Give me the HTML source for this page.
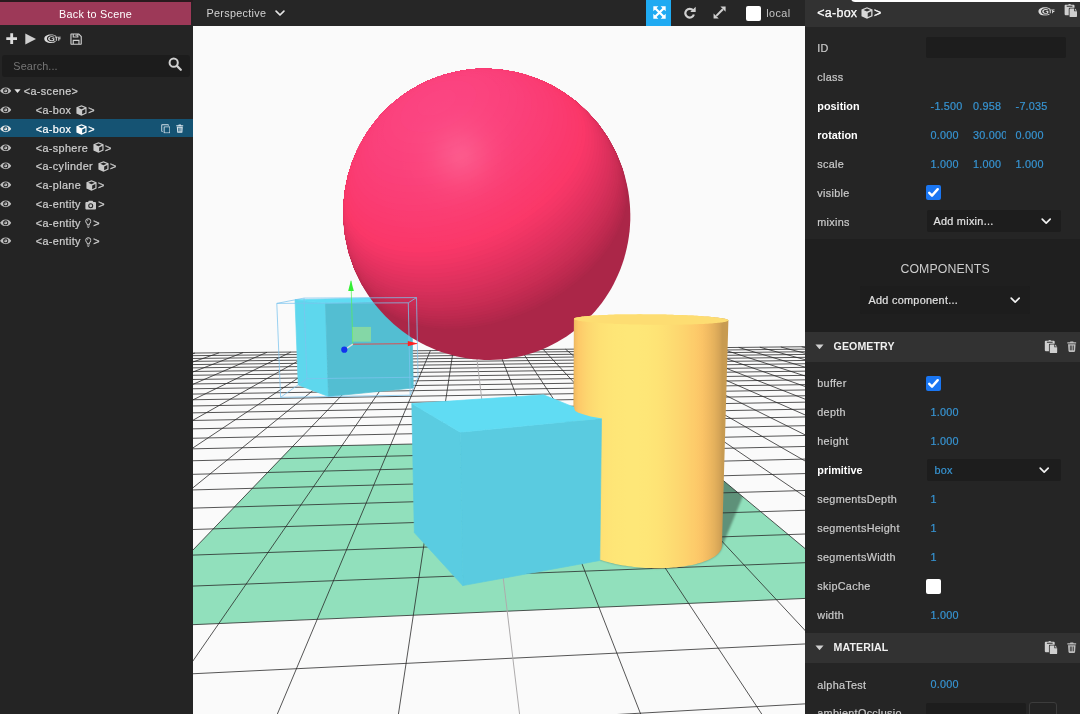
<!DOCTYPE html>
<html lang="en"><head><meta charset="utf-8"><title>A-Frame Inspector</title>
<style>
*{box-sizing:border-box;margin:0;padding:0}
html,body{width:1080px;height:714px;overflow:hidden;background:#242424;font-family:"Liberation Sans",sans-serif;}
#root{position:relative;width:1080px;height:714px;overflow:hidden}
#scene{position:absolute;left:0;top:0}
.abs{position:absolute}
#left{position:absolute;left:0;top:0;width:192.7px;height:714px;background:#242424}
#left,#bar,#right{will-change:transform}
#back{position:absolute;left:0;top:1.8px;width:191.1px;height:23.4px;background:#9d3958;color:#fff;font-size:10.83px;letter-spacing:0.25px;text-align:center;line-height:24.4px;}
#topstrip{position:absolute;left:0;top:0;width:192.7px;height:1.8px;background:#2a1a1e}
#search{position:absolute;left:2px;top:55px;width:187.5px;height:21.5px;background:#1c1c1c;border-radius:3px;color:#767676;font-size:10.83px;letter-spacing:0.12px;line-height:22px;padding-left:11.3px}
.row{position:absolute;left:0;width:192.7px;height:18.75px;color:#cdcdcd;-webkit-text-stroke:0.22px #cdcdcd;font-size:10.83px;letter-spacing:0.36px;line-height:18.75px;white-space:nowrap}
.row.sel{background:#155373;color:#fff;-webkit-text-stroke:0.22px #fff}
.row .t{position:absolute;left:35.8px;top:1.1px}
.row svg{position:absolute}
.ic{fill:#c8c8c8}
#bar{position:absolute;left:192.7px;top:0;width:612.5px;height:26.4px;background:#262626;color:#d2d2d2;font-size:11px}
#right{position:absolute;left:805.2px;top:0;width:274.8px;height:714px;background:#252525;color:#c9c9c9;font-size:10px}
#rhead{position:absolute;left:0;top:0;width:100%;height:26.6px;background:#323232}
.lab{position:absolute;left:12.3px;white-space:nowrap;color:#cbcbcb;-webkit-text-stroke:0.2px #cbcbcb;font-size:10.83px;letter-spacing:0.3px}
.lab.b{font-weight:bold;color:#fff;letter-spacing:0.02px;-webkit-text-stroke:0}
.num{position:absolute;white-space:nowrap;color:#3794d2;-webkit-text-stroke:0.2px #3794d2;font-size:10.83px;letter-spacing:0.2px}
.inp{position:absolute;background:#1d1d1d;border-radius:2px}
.chead{position:absolute;left:0;width:100%;height:29.8px;background:#323232}
.chead .ti{position:absolute;left:28.6px;top:0;line-height:29.8px;font-weight:bold;color:#f0f0f0;font-size:10.6px;letter-spacing:0.1px}
.cb{position:absolute;width:14.8px;height:14.8px;border-radius:2px}
.cb.on{background:#1a76f2}
.cb.off{background:#fff}
</style></head><body><div id="root">
<svg id="scene" width="1080" height="714" viewBox="0 0 1080 714">
<defs>
<linearGradient id="cylg" gradientUnits="userSpaceOnUse" x1="573.3" y1="0" x2="725.1" y2="0"><stop offset="0.000" stop-color="#e0ae52"/><stop offset="0.004" stop-color="#ecb856"/><stop offset="0.015" stop-color="#f9c15b"/><stop offset="0.034" stop-color="#ffca5f"/><stop offset="0.060" stop-color="#ffd263"/><stop offset="0.094" stop-color="#ffd966"/><stop offset="0.135" stop-color="#ffdf69"/><stop offset="0.182" stop-color="#ffe46b"/><stop offset="0.236" stop-color="#ffe76d"/><stop offset="0.294" stop-color="#ffea6e"/><stop offset="0.356" stop-color="#ffeb6f"/><stop offset="0.421" stop-color="#ffeb6f"/><stop offset="0.488" stop-color="#ffe96e"/><stop offset="0.555" stop-color="#ffe66c"/><stop offset="0.622" stop-color="#ffe16a"/><stop offset="0.686" stop-color="#ffdb67"/><stop offset="0.746" stop-color="#ffd564"/><stop offset="0.802" stop-color="#ffcd61"/><stop offset="0.852" stop-color="#fdc55d"/><stop offset="0.895" stop-color="#f1bb58"/><stop offset="0.932" stop-color="#e5b254"/><stop offset="0.961" stop-color="#d8a74f"/><stop offset="0.982" stop-color="#ca9d4a"/><stop offset="0.995" stop-color="#ca9d4a"/><stop offset="1.000" stop-color="#ca9d4a"/><stop offset="1.000" stop-color="#ca9d4a"/></linearGradient>
<radialGradient id="spec" gradientUnits="userSpaceOnUse" cx="461.2" cy="156.7" r="140"><stop offset="0.000" stop-color="#fff" stop-opacity="0.137"/><stop offset="0.036" stop-color="#fff" stop-opacity="0.132"/><stop offset="0.071" stop-color="#fff" stop-opacity="0.120"/><stop offset="0.107" stop-color="#fff" stop-opacity="0.103"/><stop offset="0.143" stop-color="#fff" stop-opacity="0.085"/><stop offset="0.179" stop-color="#fff" stop-opacity="0.068"/><stop offset="0.214" stop-color="#fff" stop-opacity="0.053"/><stop offset="0.250" stop-color="#fff" stop-opacity="0.042"/><stop offset="0.286" stop-color="#fff" stop-opacity="0.032"/><stop offset="0.321" stop-color="#fff" stop-opacity="0.025"/><stop offset="0.357" stop-color="#fff" stop-opacity="0.020"/><stop offset="0.393" stop-color="#fff" stop-opacity="0.015"/><stop offset="0.429" stop-color="#fff" stop-opacity="0.012"/><stop offset="0.464" stop-color="#fff" stop-opacity="0.010"/><stop offset="0.500" stop-color="#fff" stop-opacity="0.008"/><stop offset="0.536" stop-color="#fff" stop-opacity="0.007"/><stop offset="0.571" stop-color="#fff" stop-opacity="0.005"/><stop offset="0.607" stop-color="#fff" stop-opacity="0.004"/><stop offset="0.643" stop-color="#fff" stop-opacity="0.003"/><stop offset="0.679" stop-color="#fff" stop-opacity="0.002"/><stop offset="0.714" stop-color="#fff" stop-opacity="0.002"/><stop offset="0.750" stop-color="#fff" stop-opacity="0.002"/><stop offset="0.786" stop-color="#fff" stop-opacity="0.001"/><stop offset="0.821" stop-color="#fff" stop-opacity="0.001"/><stop offset="0.857" stop-color="#fff" stop-opacity="0.001"/><stop offset="0.893" stop-color="#fff" stop-opacity="0.001"/><stop offset="0.929" stop-color="#fff" stop-opacity="0.001"/><stop offset="0.964" stop-color="#fff" stop-opacity="0.001"/><stop offset="1.000" stop-color="#fff" stop-opacity="0.000"/></radialGradient>
<clipPath id="sphclip"><polygon points="630.3,219.8 630.0,225.4 629.6,231.0 628.9,236.6 628.0,242.1 626.9,247.6 625.6,253.0 624.1,258.4 622.4,263.7 620.5,268.9 618.4,274.1 616.1,279.1 613.7,284.0 611.0,288.9 608.2,293.6 605.1,298.2 602.0,302.7 598.6,307.0 595.1,311.3 591.4,315.3 587.6,319.2 583.7,323.0 579.6,326.6 575.4,330.0 571.0,333.3 566.5,336.4 561.9,339.3 557.3,342.1 552.5,344.6 547.6,347.0 542.6,349.2 537.5,351.2 532.4,353.0 527.2,354.6 522.0,356.0 516.7,357.1 511.3,358.1 505.9,358.9 500.5,359.5 495.1,359.8 489.7,360.0 484.2,359.9 478.7,359.6 473.3,359.2 467.9,358.5 462.5,357.6 457.1,356.5 451.7,355.1 446.5,353.6 441.2,351.9 436.1,350.0 431.0,347.8 425.9,345.5 421.0,343.0 416.1,340.3 411.4,337.4 406.7,334.3 402.2,331.0 397.8,327.5 393.5,323.9 389.4,320.1 385.4,316.2 381.5,312.1 377.8,307.8 374.2,303.4 370.9,298.9 367.6,294.2 364.6,289.4 361.8,284.4 359.1,279.4 356.6,274.2 354.3,269.0 352.3,263.6 350.4,258.2 348.7,252.7 347.3,247.1 346.0,241.5 345.0,235.8 344.2,230.1 343.6,224.4 343.3,218.6 343.2,212.8 343.3,207.0 343.6,201.2 344.2,195.4 345.0,189.7 346.0,184.0 347.2,178.3 348.7,172.7 350.4,167.1 352.3,161.6 354.4,156.2 356.8,150.9 359.3,145.6 362.1,140.5 365.1,135.5 368.3,130.6 371.7,125.9 375.2,121.3 379.0,116.8 382.9,112.5 387.0,108.4 391.3,104.4 395.7,100.6 400.3,97.0 405.0,93.6 409.9,90.4 414.9,87.4 420.0,84.6 425.2,82.0 430.6,79.7 436.0,77.5 441.5,75.6 447.1,73.9 452.7,72.5 458.4,71.3 464.1,70.3 469.9,69.5 475.7,69.0 481.6,68.8 487.4,68.7 493.2,69.0 499.0,69.4 504.8,70.1 510.6,71.1 516.3,72.2 521.9,73.6 527.5,75.2 533.0,77.1 538.5,79.2 543.8,81.5 549.1,84.0 554.3,86.7 559.3,89.6 564.2,92.7 569.0,96.0 573.6,99.5 578.1,103.2 582.5,107.0 586.7,111.0 590.7,115.2 594.6,119.5 598.3,124.0 601.8,128.6 605.1,133.3 608.2,138.2 611.1,143.2 613.9,148.2 616.4,153.4 618.7,158.6 620.8,164.0 622.8,169.4 624.5,174.8 625.9,180.4 627.2,185.9 628.3,191.5 629.1,197.2 629.7,202.8 630.1,208.4 630.3,214.1"/></clipPath>
</defs>
<filter id="desat" x="0" y="0" width="1080" height="714" filterUnits="userSpaceOnUse" color-interpolation-filters="sRGB"><feColorMatrix type="matrix" values="0.9598 0.0211 0.0375 0 0  0.0220 0.9421 0.0401 0 0  0.0306 0.0308 0.9490 0 0  0 0 0 1 0"/></filter>
<rect x="0" y="0" width="1080" height="714" fill="#fafafa"/>
<g filter="url(#desat)">
<polygon points="292.4,446.6 672.6,438.4 862.1,596.0 118.0,627.9" fill="#8be3ba"/>
<clipPath id="planeclip"><polygon points="292.4,446.6 672.6,438.4 862.1,596.0 118.0,627.9"/></clipPath>
<filter id="shblur" x="600" y="400" width="300" height="250" filterUnits="userSpaceOnUse"><feGaussianBlur stdDeviation="1.3"/></filter>
<g clip-path="url(#planeclip)"><polygon points="634.3,471.9 635.8,470.5 637.8,469.1 640.3,467.9 643.3,466.7 646.8,465.7 650.7,464.8 655.0,464.0 659.6,463.4 664.5,462.9 669.6,462.6 674.9,462.3 680.4,462.3 686.0,462.4 691.6,462.6 697.2,463.0 702.8,463.5 708.3,464.2 713.7,465.0 718.8,465.9 723.7,466.9 728.3,468.1 732.5,469.3 736.4,470.7 739.8,472.1 742.7,473.6 745.1,475.2 747.0,476.8 748.2,478.4 748.8,480.1 748.8,481.7 721.6,548.0 720.4,550.7 718.4,553.3 715.4,555.9 711.6,558.2 707.0,560.4 701.6,562.4 695.5,564.2 688.7,565.6 681.3,566.8 673.5,567.6 665.3,568.1 656.9,568.2 648.3,568.0 639.7,567.5 631.3,566.6 623.1,565.4 615.2,563.9 607.8,562.1 601.0,560.1 594.7,557.9 589.2,555.4 584.4,552.9 580.5,550.2 577.3,547.5 575.0,544.7 573.5,542.0 572.8,539.2 573.0,536.5 573.9,533.9 575.6,531.4" fill="#5a9378" filter="url(#shblur)"/></g>
<g id="grid" fill="none" stroke-width="1"><path stroke="#262626" stroke-opacity="0.78" d="M190.0 353.1L808.0 346.7M190.0 355.7L808.0 349.1M190.0 358.5L808.0 351.7M190.0 361.4L808.0 354.4M190.0 364.6L808.0 357.3M190.0 367.9L808.0 360.4M190.0 371.5L808.0 363.7M190.0 375.3L808.0 367.3M190.0 379.5L808.0 371.1M190.0 384.0L808.0 375.3M190.0 388.8L808.0 379.8M190.0 394.1L808.0 384.6M190.0 399.8L808.0 389.9M190.0 406.0L808.0 395.7M190.0 412.9L808.0 402.1M190.0 420.5L808.0 409.1M190.0 428.9L808.0 416.9M190.0 438.3L808.0 425.6M195.0 353.1L190.0 354.6M190.0 448.9L808.0 435.4M219.1 352.8L190.0 363.0M190.0 460.8L808.0 446.4M243.1 352.6L190.0 373.1M190.0 474.4L808.0 459.0M267.0 352.3L190.0 385.6M190.0 490.0L808.0 473.5M290.8 352.1L190.0 401.3M190.0 508.2L808.0 490.4M314.4 351.8L190.0 421.9M190.0 529.6L808.0 510.2M337.8 351.6L190.0 449.9M190.0 555.2L808.0 533.9M361.2 351.3L190.0 490.2M190.0 586.2L808.0 562.6M384.4 351.1L190.0 553.1M190.0 624.8L808.0 598.3M407.5 350.9L190.0 665.2M190.0 673.9L808.0 643.8M430.4 350.6L276.1 717.0M572.9 717.0L808.0 703.7M453.2 350.4L398.0 717.0M498.5 349.9L641.8 717.0M520.9 349.7L763.7 717.0M543.3 349.5L808.0 633.6M565.5 349.2L808.0 551.0M587.5 349.0L808.0 498.7M609.5 348.8L808.0 462.7M631.3 348.5L808.0 436.3M653.0 348.3L808.0 416.2M674.6 348.1L808.0 400.3M696.1 347.9L808.0 387.5M717.4 347.7L808.0 376.9M738.7 347.4L808.0 368.0M759.8 347.2L808.0 360.5M780.8 347.0L808.0 354.0M801.7 346.8L808.0 348.3"/><path stroke="#aaaaaa" d="M475.9 350.2L519.9 717.0"/></g>
<g id="selbox"><polygon points="295.0,299.8 325.4,303.1 328.5,396.5 298.2,384.9" fill="#54d8f0" stroke="#54d8f0" stroke-width="0.7" stroke-linejoin="round"/><polygon points="325.4,303.1 411.6,300.7 413.3,388.0 328.5,396.5" fill="#4abfd5" stroke="#4abfd5" stroke-width="0.7" stroke-linejoin="round"/><polygon points="295.0,299.8 375.7,297.8 411.6,300.7 325.4,303.1" fill="#56ddf6" stroke="#56ddf6" stroke-width="0.7" stroke-linejoin="round"/></g>
<g id="sphere"><polygon points="630.3,219.8 630.0,225.4 629.6,231.0 628.9,236.6 628.0,242.1 626.9,247.6 625.6,253.0 624.1,258.4 622.4,263.7 620.5,268.9 618.4,274.1 616.1,279.1 613.7,284.0 611.0,288.9 608.2,293.6 605.1,298.2 602.0,302.7 598.6,307.0 595.1,311.3 591.4,315.3 587.6,319.2 583.7,323.0 579.6,326.6 575.4,330.0 571.0,333.3 566.5,336.4 561.9,339.3 557.3,342.1 552.5,344.6 547.6,347.0 542.6,349.2 537.5,351.2 532.4,353.0 527.2,354.6 522.0,356.0 516.7,357.1 511.3,358.1 505.9,358.9 500.5,359.5 495.1,359.8 489.7,360.0 484.2,359.9 478.7,359.6 473.3,359.2 467.9,358.5 462.5,357.6 457.1,356.5 451.7,355.1 446.5,353.6 441.2,351.9 436.1,350.0 431.0,347.8 425.9,345.5 421.0,343.0 416.1,340.3 411.4,337.4 406.7,334.3 402.2,331.0 397.8,327.5 393.5,323.9 389.4,320.1 385.4,316.2 381.5,312.1 377.8,307.8 374.2,303.4 370.9,298.9 367.6,294.2 364.6,289.4 361.8,284.4 359.1,279.4 356.6,274.2 354.3,269.0 352.3,263.6 350.4,258.2 348.7,252.7 347.3,247.1 346.0,241.5 345.0,235.8 344.2,230.1 343.6,224.4 343.3,218.6 343.2,212.8 343.3,207.0 343.6,201.2 344.2,195.4 345.0,189.7 346.0,184.0 347.2,178.3 348.7,172.7 350.4,167.1 352.3,161.6 354.4,156.2 356.8,150.9 359.3,145.6 362.1,140.5 365.1,135.5 368.3,130.6 371.7,125.9 375.2,121.3 379.0,116.8 382.9,112.5 387.0,108.4 391.3,104.4 395.7,100.6 400.3,97.0 405.0,93.6 409.9,90.4 414.9,87.4 420.0,84.6 425.2,82.0 430.6,79.7 436.0,77.5 441.5,75.6 447.1,73.9 452.7,72.5 458.4,71.3 464.1,70.3 469.9,69.5 475.7,69.0 481.6,68.8 487.4,68.7 493.2,69.0 499.0,69.4 504.8,70.1 510.6,71.1 516.3,72.2 521.9,73.6 527.5,75.2 533.0,77.1 538.5,79.2 543.8,81.5 549.1,84.0 554.3,86.7 559.3,89.6 564.2,92.7 569.0,96.0 573.6,99.5 578.1,103.2 582.5,107.0 586.7,111.0 590.7,115.2 594.6,119.5 598.3,124.0 601.8,128.6 605.1,133.3 608.2,138.2 611.1,143.2 613.9,148.2 616.4,153.4 618.7,158.6 620.8,164.0 622.8,169.4 624.5,174.8 625.9,180.4 627.2,185.9 628.3,191.5 629.1,197.2 629.7,202.8 630.1,208.4 630.3,214.1" fill="#af2145"/><polygon points="575.9,101.3 587.5,111.9 598.3,124.1 608.0,137.8 616.2,152.9 622.7,169.2 626.9,186.2 626.9,202.7 623.5,218.4 617.5,233.1 609.5,246.8 599.9,259.5 589.1,271.2 577.2,281.8 564.4,291.5 550.9,300.1 536.8,307.7 522.1,314.2 507.1,319.6 491.6,323.9 475.9,327.0 460.0,328.7 444.1,328.9 428.2,327.5 412.7,324.2 397.8,318.8 383.9,310.7 371.7,299.5 362.0,284.8 354.3,269.0 348.7,252.7 345.1,236.3 343.4,220.0 343.4,204.3 345.0,189.3 348.0,175.3 352.0,162.4 356.8,150.9 362.0,140.7 367.4,131.9 372.8,124.4 377.9,118.0 382.8,112.6 387.2,108.2 391.2,104.4 394.9,101.3 398.2,98.7 401.1,96.4 403.8,94.4 406.3,92.8 408.5,91.3 410.6,89.9 412.5,88.8 414.4,87.7 416.1,86.7 417.7,85.8 419.2,85.0 420.7,84.2 422.2,83.5 423.6,82.8 425.0,82.1 426.4,81.5 427.9,80.8 429.3,80.2 430.7,79.6 432.2,79.0 433.7,78.4 435.3,77.8 437.0,77.2 438.7,76.5 440.6,75.9 442.6,75.2 444.8,74.6 447.2,73.9 449.8,73.2 452.8,72.5 456.1,71.7 459.8,71.0 464.1,70.3 468.9,69.6 474.5,69.1 480.9,68.8 488.2,68.8 496.5,69.2 505.8,70.3 516.1,72.2 527.3,75.2 539.1,79.4 551.3,85.1 563.7,92.4" fill="#b22246"/><polygon points="575.9,101.3 587.5,111.9 598.3,124.1 608.0,137.8 616.2,152.9 622.7,169.2 626.4,186.0 625.8,202.2 622.1,217.5 616.0,232.0 607.9,245.4 598.3,257.9 587.5,269.4 575.6,279.9 563.0,289.3 549.6,297.8 535.6,305.3 521.2,311.8 506.3,317.1 491.0,321.4 475.5,324.5 459.8,326.3 444.0,326.7 428.3,325.4 412.9,322.4 398.1,317.2 384.2,309.6 371.9,299.0 362.0,284.8 354.3,269.0 348.7,252.7 345.1,236.3 343.4,220.0 343.4,204.3 345.0,189.3 348.0,175.3 352.0,162.4 356.8,150.9 362.0,140.7 367.4,131.9 372.8,124.4 377.9,118.0 382.8,112.6 387.2,108.2 391.2,104.4 394.9,101.3 398.2,98.7 401.1,96.4 403.8,94.4 406.3,92.8 408.5,91.3 410.6,89.9 412.5,88.8 414.4,87.7 416.1,86.7 417.7,85.8 419.2,85.0 420.7,84.2 422.2,83.5 423.6,82.8 425.0,82.1 426.4,81.5 427.9,80.8 429.3,80.2 430.7,79.6 432.2,79.0 433.7,78.4 435.3,77.8 437.0,77.2 438.7,76.5 440.6,75.9 442.6,75.2 444.8,74.6 447.2,73.9 449.8,73.2 452.8,72.5 456.1,71.7 459.8,71.0 464.1,70.3 468.9,69.6 474.5,69.1 480.9,68.8 488.2,68.8 496.5,69.2 505.8,70.3 516.1,72.2 527.3,75.2 539.1,79.4 551.3,85.1 563.7,92.4" fill="#b62248"/><polygon points="575.9,101.3 587.5,111.9 598.3,124.1 608.0,137.8 616.2,152.9 622.7,169.2 625.7,185.7 624.7,201.6 620.7,216.6 614.4,230.8 606.2,244.0 596.6,256.3 585.8,267.5 574.0,277.8 561.5,287.1 548.2,295.5 534.4,302.9 520.1,309.2 505.4,314.6 490.4,318.8 475.0,322.0 459.5,323.8 443.9,324.3 428.4,323.2 413.1,320.4 398.3,315.6 384.5,308.4 372.1,298.4 362.0,284.8 354.3,269.0 348.7,252.7 345.1,236.3 343.4,220.0 343.4,204.3 345.0,189.3 348.0,175.3 352.0,162.4 356.8,150.9 362.0,140.7 367.4,131.9 372.8,124.4 377.9,118.0 382.8,112.6 387.2,108.2 391.2,104.4 394.9,101.3 398.2,98.7 401.1,96.4 403.8,94.4 406.3,92.8 408.5,91.3 410.6,89.9 412.5,88.8 414.4,87.7 416.1,86.7 417.7,85.8 419.2,85.0 420.7,84.2 422.2,83.5 423.6,82.8 425.0,82.1 426.4,81.5 427.9,80.8 429.3,80.2 430.7,79.6 432.2,79.0 433.7,78.4 435.3,77.8 437.0,77.2 438.7,76.5 440.6,75.9 442.6,75.2 444.8,74.6 447.2,73.9 449.8,73.2 452.8,72.5 456.1,71.7 459.8,71.0 464.1,70.3 468.9,69.6 474.5,69.1 480.9,68.8 488.2,68.8 496.5,69.2 505.8,70.3 516.1,72.2 527.3,75.2 539.1,79.4 551.3,85.1 563.7,92.4" fill="#b92349"/><polygon points="575.9,101.3 587.5,111.9 598.3,124.1 608.0,137.8 616.2,152.9 622.6,169.2 624.9,185.3 623.4,200.9 619.2,215.7 612.7,229.6 604.4,242.5 594.8,254.5 584.1,265.6 572.4,275.7 559.9,284.9 546.8,293.1 533.2,300.3 519.1,306.6 504.6,311.9 489.7,316.2 474.6,319.3 459.2,321.3 443.8,321.8 428.5,320.9 413.3,318.4 398.7,313.8 384.8,307.0 372.4,297.5 362.0,284.7 354.3,269.0 348.7,252.7 345.1,236.3 343.4,220.0 343.4,204.3 345.0,189.3 348.0,175.3 352.0,162.4 356.8,150.9 362.0,140.7 367.4,131.9 372.8,124.4 377.9,118.0 382.8,112.6 387.2,108.2 391.2,104.4 394.9,101.3 398.2,98.7 401.1,96.4 403.8,94.4 406.3,92.8 408.5,91.3 410.6,89.9 412.5,88.8 414.4,87.7 416.1,86.7 417.7,85.8 419.2,85.0 420.7,84.2 422.2,83.5 423.6,82.8 425.0,82.1 426.4,81.5 427.9,80.8 429.3,80.2 430.7,79.6 432.2,79.0 433.7,78.4 435.3,77.8 437.0,77.2 438.7,76.5 440.6,75.9 442.6,75.2 444.8,74.6 447.2,73.9 449.8,73.2 452.8,72.5 456.1,71.7 459.8,71.0 464.1,70.3 468.9,69.6 474.5,69.1 480.9,68.8 488.2,68.8 496.5,69.2 505.8,70.3 516.1,72.2 527.3,75.2 539.1,79.4 551.3,85.1 563.7,92.4" fill="#bc234a"/><polygon points="575.9,101.3 587.5,111.9 598.3,124.1 608.0,137.8 616.2,152.9 622.2,169.0 623.9,184.9 622.1,200.2 617.5,214.7 610.9,228.3 602.6,241.0 593.0,252.8 582.3,263.6 570.7,273.5 558.4,282.5 545.4,290.6 531.9,297.8 518.0,304.0 503.7,309.2 489.0,313.5 474.1,316.6 459.0,318.6 443.7,319.3 428.5,318.5 413.5,316.2 399.0,311.9 385.2,305.5 372.7,296.5 362.1,284.4 354.3,269.0 348.7,252.7 345.1,236.3 343.4,220.0 343.4,204.3 345.0,189.3 348.0,175.3 352.0,162.4 356.8,150.9 362.0,140.7 367.4,131.9 372.8,124.4 377.9,118.0 382.8,112.6 387.2,108.2 391.2,104.4 394.9,101.3 398.2,98.7 401.1,96.4 403.8,94.4 406.3,92.8 408.5,91.3 410.6,89.9 412.5,88.8 414.4,87.7 416.1,86.7 417.7,85.8 419.2,85.0 420.7,84.2 422.2,83.5 423.6,82.8 425.0,82.1 426.4,81.5 427.9,80.8 429.3,80.2 430.7,79.6 432.2,79.0 433.7,78.4 435.3,77.8 437.0,77.2 438.7,76.5 440.6,75.9 442.6,75.2 444.8,74.6 447.2,73.9 449.8,73.2 452.8,72.5 456.1,71.7 459.8,71.0 464.1,70.3 468.9,69.6 474.5,69.1 480.9,68.8 488.2,68.8 496.5,69.2 505.8,70.3 516.1,72.2 527.3,75.2 539.1,79.4 551.3,85.1 563.7,92.4" fill="#c0244b"/><polygon points="575.9,101.3 587.5,111.9 598.3,124.1 608.0,137.8 616.2,152.9 621.6,168.8 622.7,184.4 620.5,199.4 615.8,213.6 609.0,226.9 600.7,239.4 591.0,250.9 580.4,261.5 568.9,271.3 556.7,280.1 543.9,288.0 530.6,295.1 516.9,301.2 502.8,306.4 488.3,310.6 473.6,313.8 458.7,315.8 443.6,316.6 428.6,316.0 413.8,313.9 399.3,309.9 385.6,303.9 373.1,295.4 362.3,283.9 354.3,269.0 348.7,252.7 345.1,236.3 343.4,220.0 343.4,204.3 345.0,189.3 348.0,175.3 352.0,162.4 356.8,150.9 362.0,140.7 367.4,131.9 372.8,124.4 377.9,118.0 382.8,112.6 387.2,108.2 391.2,104.4 394.9,101.3 398.2,98.7 401.1,96.4 403.8,94.4 406.3,92.8 408.5,91.3 410.6,89.9 412.5,88.8 414.4,87.7 416.1,86.7 417.7,85.8 419.2,85.0 420.7,84.2 422.2,83.5 423.6,82.8 425.0,82.1 426.4,81.5 427.9,80.8 429.3,80.2 430.7,79.6 432.2,79.0 433.7,78.4 435.3,77.8 437.0,77.2 438.7,76.5 440.6,75.9 442.6,75.2 444.8,74.6 447.2,73.9 449.8,73.2 452.8,72.5 456.1,71.7 459.8,71.0 464.1,70.3 468.9,69.6 474.5,69.1 480.9,68.8 488.2,68.8 496.5,69.2 505.8,70.3 516.1,72.2 527.3,75.2 539.1,79.4 551.3,85.1 563.7,92.4" fill="#c3254d"/><polygon points="575.9,101.3 587.5,111.9 598.3,124.1 608.0,137.8 616.2,152.9 620.9,168.6 621.5,183.8 618.9,198.5 613.9,212.4 607.0,225.5 598.7,237.7 589.1,249.0 578.5,259.4 567.1,269.0 555.1,277.6 542.4,285.4 529.3,292.3 515.8,298.4 501.8,303.5 487.6,307.7 473.1,310.9 458.4,313.0 443.5,313.9 428.7,313.4 414.0,311.5 399.7,307.8 386.1,302.1 373.5,294.0 362.6,283.2 354.3,269.0 348.7,252.7 345.1,236.3 343.4,220.0 343.4,204.3 345.0,189.3 348.0,175.3 352.0,162.4 356.8,150.9 362.0,140.7 367.4,131.9 372.8,124.4 377.9,118.0 382.8,112.6 387.2,108.2 391.2,104.4 394.9,101.3 398.2,98.7 401.1,96.4 403.8,94.4 406.3,92.8 408.5,91.3 410.6,89.9 412.5,88.8 414.4,87.7 416.1,86.7 417.7,85.8 419.2,85.0 420.7,84.2 422.2,83.5 423.6,82.8 425.0,82.1 426.4,81.5 427.9,80.8 429.3,80.2 430.7,79.6 432.2,79.0 433.7,78.4 435.3,77.8 437.0,77.2 438.7,76.5 440.6,75.9 442.6,75.2 444.8,74.6 447.2,73.9 449.8,73.2 452.8,72.5 456.1,71.7 459.8,71.0 464.1,70.3 468.9,69.6 474.5,69.1 480.9,68.8 488.2,68.8 496.5,69.2 505.8,70.3 516.1,72.2 527.3,75.2 539.1,79.4 551.3,85.1 563.7,92.4" fill="#c6254e"/><polygon points="575.9,101.3 587.5,111.9 598.3,124.1 608.0,137.8 616.0,152.9 619.9,168.2 620.0,183.2 617.1,197.6 612.0,211.2 605.0,224.0 596.6,235.9 587.0,247.0 576.5,257.2 565.2,266.6 553.3,275.1 540.9,282.7 527.9,289.5 514.6,295.5 500.9,300.6 486.8,304.7 472.6,307.9 458.1,310.1 443.4,311.0 428.8,310.7 414.3,309.0 400.1,305.5 386.5,300.2 374.0,292.6 363.0,282.3 354.4,268.9 348.7,252.7 345.1,236.3 343.4,220.0 343.4,204.3 345.0,189.3 348.0,175.3 352.0,162.4 356.8,150.9 362.0,140.7 367.4,131.9 372.8,124.4 377.9,118.0 382.8,112.6 387.2,108.2 391.2,104.4 394.9,101.3 398.2,98.7 401.1,96.4 403.8,94.4 406.3,92.8 408.5,91.3 410.6,89.9 412.5,88.8 414.4,87.7 416.1,86.7 417.7,85.8 419.2,85.0 420.7,84.2 422.2,83.5 423.6,82.8 425.0,82.1 426.4,81.5 427.9,80.8 429.3,80.2 430.7,79.6 432.2,79.0 433.7,78.4 435.3,77.8 437.0,77.2 438.7,76.5 440.6,75.9 442.6,75.2 444.8,74.6 447.2,73.9 449.8,73.2 452.8,72.5 456.1,71.7 459.8,71.0 464.1,70.3 468.9,69.6 474.5,69.1 480.9,68.8 488.2,68.8 496.5,69.2 505.8,70.3 516.1,72.2 527.3,75.2 539.1,79.4 551.3,85.1 563.7,92.4" fill="#ca264f"/><polygon points="575.9,101.3 587.5,111.9 598.3,124.1 608.0,137.8 615.6,152.8 618.8,167.8 618.4,182.5 615.3,196.5 609.9,209.9 602.8,222.4 594.4,234.1 584.9,245.0 574.5,254.9 563.3,264.1 551.6,272.4 539.3,279.9 526.5,286.6 513.4,292.5 499.9,297.5 486.1,301.7 472.0,304.8 457.7,307.0 443.3,308.1 428.9,307.9 414.6,306.3 400.5,303.1 387.1,298.1 374.5,290.9 363.4,281.2 354.6,268.6 348.7,252.7 345.1,236.3 343.4,220.0 343.4,204.3 345.0,189.3 348.0,175.3 352.0,162.4 356.8,150.9 362.0,140.7 367.4,131.9 372.8,124.4 377.9,118.0 382.8,112.6 387.2,108.2 391.2,104.4 394.9,101.3 398.2,98.7 401.1,96.4 403.8,94.4 406.3,92.8 408.5,91.3 410.6,89.9 412.5,88.8 414.4,87.7 416.1,86.7 417.7,85.8 419.2,85.0 420.7,84.2 422.2,83.5 423.6,82.8 425.0,82.1 426.4,81.5 427.9,80.8 429.3,80.2 430.7,79.6 432.2,79.0 433.7,78.4 435.3,77.8 437.0,77.2 438.7,76.5 440.6,75.9 442.6,75.2 444.8,74.6 447.2,73.9 449.8,73.2 452.8,72.5 456.1,71.7 459.8,71.0 464.1,70.3 468.9,69.6 474.5,69.1 480.9,68.8 488.2,68.8 496.5,69.2 505.8,70.3 516.1,72.2 527.3,75.2 539.1,79.4 551.3,85.1 563.7,92.4" fill="#cd2751"/><polygon points="575.9,101.3 587.5,111.9 598.3,124.1 608.0,137.8 614.9,152.6 617.5,167.3 616.7,181.7 613.2,195.5 607.7,208.5 600.6,220.8 592.2,232.2 582.7,242.8 572.4,252.6 561.3,261.6 549.7,269.7 537.6,277.1 525.1,283.7 512.1,289.4 498.9,294.4 485.3,298.5 471.5,301.7 457.4,303.9 443.2,305.0 429.0,305.0 414.9,303.6 401.0,300.6 387.6,295.9 375.1,289.2 363.9,280.0 354.8,268.0 348.7,252.7 345.1,236.3 343.4,220.0 343.4,204.3 345.0,189.3 348.0,175.3 352.0,162.4 356.8,150.9 362.0,140.7 367.4,131.9 372.8,124.4 377.9,118.0 382.8,112.6 387.2,108.2 391.2,104.4 394.9,101.3 398.2,98.7 401.1,96.4 403.8,94.4 406.3,92.8 408.5,91.3 410.6,89.9 412.5,88.8 414.4,87.7 416.1,86.7 417.7,85.8 419.2,85.0 420.7,84.2 422.2,83.5 423.6,82.8 425.0,82.1 426.4,81.5 427.9,80.8 429.3,80.2 430.7,79.6 432.2,79.0 433.7,78.4 435.3,77.8 437.0,77.2 438.7,76.5 440.6,75.9 442.6,75.2 444.8,74.6 447.2,73.9 449.8,73.2 452.8,72.5 456.1,71.7 459.8,71.0 464.1,70.3 468.9,69.6 474.5,69.1 480.9,68.8 488.2,68.8 496.5,69.2 505.8,70.3 516.1,72.2 527.3,75.2 539.1,79.4 551.3,85.1 563.7,92.4" fill="#d02752"/><polygon points="575.9,101.3 587.5,111.9 598.3,124.1 608.0,137.8 614.1,152.3 616.1,166.8 614.8,180.9 611.1,194.4 605.5,207.1 598.3,219.1 589.8,230.3 580.4,240.6 570.2,250.2 559.3,259.0 547.9,266.9 535.9,274.2 523.6,280.6 510.9,286.3 497.8,291.2 484.5,295.2 470.9,298.4 457.1,300.7 443.1,301.9 429.1,302.0 415.2,300.7 401.4,298.0 388.2,293.6 375.7,287.2 364.5,278.6 355.2,267.2 348.7,252.7 345.1,236.3 343.4,220.0 343.4,204.3 345.0,189.3 348.0,175.3 352.0,162.4 356.8,150.9 362.0,140.7 367.4,131.9 372.8,124.4 377.9,118.0 382.8,112.6 387.2,108.2 391.2,104.4 394.9,101.3 398.2,98.7 401.1,96.4 403.8,94.4 406.3,92.8 408.5,91.3 410.6,89.9 412.5,88.8 414.4,87.7 416.1,86.7 417.7,85.8 419.2,85.0 420.7,84.2 422.2,83.5 423.6,82.8 425.0,82.1 426.4,81.5 427.9,80.8 429.3,80.2 430.7,79.6 432.2,79.0 433.7,78.4 435.3,77.8 437.0,77.2 438.7,76.5 440.6,75.9 442.6,75.2 444.8,74.6 447.2,73.9 449.8,73.2 452.8,72.5 456.1,71.7 459.8,71.0 464.1,70.3 468.9,69.6 474.5,69.1 480.9,68.8 488.2,68.8 496.5,69.2 505.8,70.3 516.1,72.2 527.3,75.2 539.1,79.4 551.3,85.1 563.7,92.4" fill="#d42853"/><polygon points="575.9,101.3 587.5,111.9 598.3,124.1 607.7,137.8 613.0,152.0 614.4,166.2 612.8,180.0 608.9,193.2 603.1,205.6 595.8,217.3 587.4,228.3 578.1,238.4 568.0,247.7 557.2,256.3 545.9,264.1 534.2,271.2 522.1,277.5 509.6,283.1 496.7,287.9 483.6,291.9 470.3,295.1 456.7,297.4 443.0,298.6 429.2,298.8 415.5,297.8 401.9,295.3 388.8,291.2 376.4,285.2 365.1,277.0 355.7,266.3 348.8,252.6 345.1,236.3 343.4,220.0 343.4,204.3 345.0,189.3 348.0,175.3 352.0,162.4 356.8,150.9 362.0,140.7 367.4,131.9 372.8,124.4 377.9,118.0 382.8,112.6 387.2,108.2 391.2,104.4 394.9,101.3 398.2,98.7 401.1,96.4 403.8,94.4 406.3,92.8 408.5,91.3 410.6,89.9 412.5,88.8 414.4,87.7 416.1,86.7 417.7,85.8 419.2,85.0 420.7,84.2 422.2,83.5 423.6,82.8 425.0,82.1 426.4,81.5 427.9,80.8 429.3,80.2 430.7,79.6 432.2,79.0 433.7,78.4 435.3,77.8 437.0,77.2 438.7,76.5 440.6,75.9 442.6,75.2 444.8,74.6 447.2,73.9 449.8,73.2 452.8,72.5 456.1,71.7 459.8,71.0 464.1,70.3 468.9,69.6 474.5,69.1 480.9,68.8 488.2,68.8 496.5,69.2 505.8,70.3 516.1,72.2 527.3,75.2 539.1,79.4 551.3,85.1 563.7,92.4" fill="#d72855"/><polygon points="575.9,101.3 587.5,111.9 598.3,124.1 607.2,137.7 611.7,151.7 612.6,165.5 610.7,179.0 606.5,191.9 600.6,204.1 593.3,215.5 584.9,226.2 575.7,236.0 565.7,245.2 555.1,253.5 543.9,261.2 532.4,268.1 520.5,274.3 508.2,279.7 495.6,284.5 482.8,288.5 469.7,291.6 456.4,293.9 442.9,295.3 429.3,295.6 415.8,294.7 402.4,292.4 389.4,288.6 377.1,283.0 365.8,275.2 356.2,265.1 349.0,252.2 345.1,236.3 343.4,220.0 343.4,204.3 345.0,189.3 348.0,175.3 352.0,162.4 356.8,150.9 362.0,140.7 367.4,131.9 372.8,124.4 377.9,118.0 382.8,112.6 387.2,108.2 391.2,104.4 394.9,101.3 398.2,98.7 401.1,96.4 403.8,94.4 406.3,92.8 408.5,91.3 410.6,89.9 412.5,88.8 414.4,87.7 416.1,86.7 417.7,85.8 419.2,85.0 420.7,84.2 422.2,83.5 423.6,82.8 425.0,82.1 426.4,81.5 427.9,80.8 429.3,80.2 430.7,79.6 432.2,79.0 433.7,78.4 435.3,77.8 437.0,77.2 438.7,76.5 440.6,75.9 442.6,75.2 444.8,74.6 447.2,73.9 449.8,73.2 452.8,72.5 456.1,71.7 459.8,71.0 464.1,70.3 468.9,69.6 474.5,69.1 480.9,68.8 488.2,68.8 496.5,69.2 505.8,70.3 516.1,72.2 527.3,75.2 539.1,79.4 551.3,85.1 563.7,92.4" fill="#da2956"/><polygon points="575.9,101.3 587.5,111.9 598.3,124.1 606.4,137.5 610.2,151.2 610.6,164.8 608.4,178.0 604.0,190.6 598.0,202.5 590.7,213.6 582.4,224.0 573.2,233.6 563.3,242.5 552.8,250.7 541.9,258.1 530.6,264.9 518.9,271.0 506.8,276.3 494.5,281.0 481.9,284.9 469.1,288.1 456.0,290.4 442.8,291.8 429.5,292.2 416.1,291.5 403.0,289.4 390.1,285.9 377.9,280.6 366.6,273.3 356.9,263.8 349.4,251.5 345.1,236.3 343.4,220.0 343.4,204.3 345.0,189.3 348.0,175.3 352.0,162.4 356.8,150.9 362.0,140.7 367.4,131.9 372.8,124.4 377.9,118.0 382.8,112.6 387.2,108.2 391.2,104.4 394.9,101.3 398.2,98.7 401.1,96.4 403.8,94.4 406.3,92.8 408.5,91.3 410.6,89.9 412.5,88.8 414.4,87.7 416.1,86.7 417.7,85.8 419.2,85.0 420.7,84.2 422.2,83.5 423.6,82.8 425.0,82.1 426.4,81.5 427.9,80.8 429.3,80.2 430.7,79.6 432.2,79.0 433.7,78.4 435.3,77.8 437.0,77.2 438.7,76.5 440.6,75.9 442.6,75.2 444.8,74.6 447.2,73.9 449.8,73.2 452.8,72.5 456.1,71.7 459.8,71.0 464.1,70.3 468.9,69.6 474.5,69.1 480.9,68.8 488.2,68.8 496.5,69.2 505.8,70.3 516.1,72.2 527.3,75.2 539.1,79.4 551.3,85.1 563.7,92.4" fill="#de2a57"/><polygon points="575.9,101.3 587.5,111.9 598.3,124.1 605.4,137.3 608.5,150.7 608.5,164.0 606.0,176.9 601.4,189.2 595.3,200.8 588.0,211.7 579.7,221.8 570.6,231.2 560.8,239.8 550.6,247.8 539.8,255.1 528.7,261.7 517.2,267.6 505.4,272.9 493.4,277.4 481.0,281.3 468.4,284.5 455.6,286.8 442.7,288.3 429.6,288.8 416.5,288.2 403.5,286.3 390.8,283.0 378.7,278.1 367.5,271.3 357.6,262.2 349.9,250.7 345.1,236.3 343.4,220.0 343.4,204.3 345.0,189.3 348.0,175.3 352.0,162.4 356.8,150.9 362.0,140.7 367.4,131.9 372.8,124.4 377.9,118.0 382.8,112.6 387.2,108.2 391.2,104.4 394.9,101.3 398.2,98.7 401.1,96.4 403.8,94.4 406.3,92.8 408.5,91.3 410.6,89.9 412.5,88.8 414.4,87.7 416.1,86.7 417.7,85.8 419.2,85.0 420.7,84.2 422.2,83.5 423.6,82.8 425.0,82.1 426.4,81.5 427.9,80.8 429.3,80.2 430.7,79.6 432.2,79.0 433.7,78.4 435.3,77.8 437.0,77.2 438.7,76.5 440.6,75.9 442.6,75.2 444.8,74.6 447.2,73.9 449.8,73.2 452.8,72.5 456.1,71.7 459.8,71.0 464.1,70.3 468.9,69.6 474.5,69.1 480.9,68.8 488.2,68.8 496.5,69.2 505.8,70.3 516.1,72.2 527.3,75.2 539.1,79.4 551.3,85.1 563.7,92.4" fill="#e12a58"/><polygon points="575.9,101.3 587.5,111.9 597.9,124.0 604.1,137.0 606.7,150.2 606.2,163.2 603.4,175.8 598.7,187.7 592.5,199.0 585.2,209.6 577.0,219.5 567.9,228.6 558.3,237.0 548.2,244.8 537.7,251.9 526.8,258.3 515.5,264.1 504.0,269.3 492.2,273.8 480.1,277.6 467.8,280.7 455.2,283.1 442.5,284.6 429.7,285.2 416.8,284.7 404.1,283.1 391.6,280.1 379.5,275.4 368.4,269.0 358.5,260.5 350.5,249.6 345.3,236.0 343.4,220.0 343.4,204.3 345.0,189.3 348.0,175.3 352.0,162.4 356.8,150.9 362.0,140.7 367.4,131.9 372.8,124.4 377.9,118.0 382.8,112.6 387.2,108.2 391.2,104.4 394.9,101.3 398.2,98.7 401.1,96.4 403.8,94.4 406.3,92.8 408.5,91.3 410.6,89.9 412.5,88.8 414.4,87.7 416.1,86.7 417.7,85.8 419.2,85.0 420.7,84.2 422.2,83.5 423.6,82.8 425.0,82.1 426.4,81.5 427.9,80.8 429.3,80.2 430.7,79.6 432.2,79.0 433.7,78.4 435.3,77.8 437.0,77.2 438.7,76.5 440.6,75.9 442.6,75.2 444.8,74.6 447.2,73.9 449.8,73.2 452.8,72.5 456.1,71.7 459.8,71.0 464.1,70.3 468.9,69.6 474.5,69.1 480.9,68.8 488.2,68.8 496.5,69.2 505.8,70.3 516.1,72.2 527.3,75.2 539.1,79.4 551.3,85.1 563.7,92.4" fill="#e42b5a"/><polygon points="575.9,101.3 587.5,111.9 597.2,123.9 602.6,136.7 604.6,149.6 603.7,162.3 600.7,174.6 595.8,186.2 589.6,197.2 582.3,207.5 574.1,217.1 565.2,226.0 555.8,234.2 545.8,241.7 535.5,248.6 524.8,254.9 513.8,260.6 502.5,265.6 491.0,270.0 479.1,273.8 467.1,276.9 454.8,279.3 442.4,280.8 429.8,281.5 417.2,281.2 404.7,279.7 392.3,276.9 380.5,272.6 369.3,266.6 359.4,258.6 351.2,248.3 345.6,235.5 343.4,220.0 343.4,204.3 345.0,189.3 348.0,175.3 352.0,162.4 356.8,150.9 362.0,140.7 367.4,131.9 372.8,124.4 377.9,118.0 382.8,112.6 387.2,108.2 391.2,104.4 394.9,101.3 398.2,98.7 401.1,96.4 403.8,94.4 406.3,92.8 408.5,91.3 410.6,89.9 412.5,88.8 414.4,87.7 416.1,86.7 417.7,85.8 419.2,85.0 420.7,84.2 422.2,83.5 423.6,82.8 425.0,82.1 426.4,81.5 427.9,80.8 429.3,80.2 430.7,79.6 432.2,79.0 433.7,78.4 435.3,77.8 437.0,77.2 438.7,76.5 440.6,75.9 442.6,75.2 444.8,74.6 447.2,73.9 449.8,73.2 452.8,72.5 456.1,71.7 459.8,71.0 464.1,70.3 468.9,69.6 474.5,69.1 480.9,68.8 488.2,68.8 496.5,69.2 505.8,70.3 516.1,72.2 527.3,75.2 539.1,79.4 551.3,85.1 563.7,92.4" fill="#e72c5b"/><polygon points="575.9,101.3 587.5,111.9 596.2,123.8 600.9,136.3 602.3,149.0 601.1,161.4 597.8,173.3 592.9,184.6 586.6,195.3 579.3,205.3 571.2,214.6 562.4,223.3 553.1,231.2 543.4,238.6 533.2,245.3 522.8,251.4 512.0,256.9 501.0,261.9 489.7,266.2 478.2,269.9 466.4,273.0 454.4,275.3 442.3,276.9 430.0,277.7 417.6,277.5 405.3,276.2 393.2,273.7 381.4,269.7 370.4,264.1 360.4,256.5 352.1,246.8 346.1,234.8 343.4,220.0 343.4,204.3 345.0,189.3 348.0,175.3 352.0,162.4 356.8,150.9 362.0,140.7 367.4,131.9 372.8,124.4 377.9,118.0 382.8,112.6 387.2,108.2 391.2,104.4 394.9,101.3 398.2,98.7 401.1,96.4 403.8,94.4 406.3,92.8 408.5,91.3 410.6,89.9 412.5,88.8 414.4,87.7 416.1,86.7 417.7,85.8 419.2,85.0 420.7,84.2 422.2,83.5 423.6,82.8 425.0,82.1 426.4,81.5 427.9,80.8 429.3,80.2 430.7,79.6 432.2,79.0 433.7,78.4 435.3,77.8 437.0,77.2 438.7,76.5 440.6,75.9 442.6,75.2 444.8,74.6 447.2,73.9 449.8,73.2 452.8,72.5 456.1,71.7 459.8,71.0 464.1,70.3 468.9,69.6 474.5,69.1 480.9,68.8 488.2,68.8 496.5,69.2 505.8,70.3 516.1,72.2 527.3,75.2 539.1,79.4 551.3,85.1 563.7,92.4" fill="#eb2c5c"/><polygon points="575.9,101.3 587.3,111.9 595.0,123.6 599.0,135.9 599.9,148.3 598.3,160.3 594.8,172.0 589.8,183.0 583.5,193.4 576.2,203.1 568.2,212.1 559.5,220.5 550.4,228.2 540.8,235.3 530.9,241.9 520.7,247.8 510.2,253.2 499.4,258.0 488.4,262.3 477.2,265.9 465.7,268.9 454.0,271.3 442.1,272.9 430.1,273.8 418.0,273.7 405.9,272.6 394.0,270.3 382.4,266.6 371.5,261.3 361.5,254.3 353.1,245.2 346.8,233.8 343.5,219.9 343.4,204.3 345.0,189.3 348.0,175.3 352.0,162.4 356.8,150.9 362.0,140.7 367.4,131.9 372.8,124.4 377.9,118.0 382.8,112.6 387.2,108.2 391.2,104.4 394.9,101.3 398.2,98.7 401.1,96.4 403.8,94.4 406.3,92.8 408.5,91.3 410.6,89.9 412.5,88.8 414.4,87.7 416.1,86.7 417.7,85.8 419.2,85.0 420.7,84.2 422.2,83.5 423.6,82.8 425.0,82.1 426.4,81.5 427.9,80.8 429.3,80.2 430.7,79.6 432.2,79.0 433.7,78.4 435.3,77.8 437.0,77.2 438.7,76.5 440.6,75.9 442.6,75.2 444.8,74.6 447.2,73.9 449.8,73.2 452.8,72.5 456.1,71.7 459.8,71.0 464.1,70.3 468.9,69.6 474.5,69.1 480.9,68.8 488.2,68.8 496.5,69.2 505.8,70.3 516.1,72.2 527.3,75.2 539.1,79.4 551.3,85.1 563.7,92.4" fill="#ee2d5e"/><polygon points="575.9,101.3 586.6,111.8 593.4,123.4 596.8,135.5 597.2,147.5 595.4,159.3 591.7,170.6 586.5,181.3 580.2,191.3 573.0,200.7 565.1,209.5 556.6,217.6 547.6,225.1 538.2,232.0 528.6,238.4 518.6,244.1 508.3,249.4 497.8,254.1 487.1,258.2 476.1,261.8 465.0,264.8 453.6,267.1 442.0,268.8 430.2,269.7 418.4,269.8 406.6,268.8 394.9,266.7 383.5,263.3 372.6,258.5 362.7,251.8 354.2,243.3 347.6,232.5 343.8,219.5 343.4,204.3 345.0,189.3 348.0,175.3 352.0,162.4 356.8,150.9 362.0,140.7 367.4,131.9 372.8,124.4 377.9,118.0 382.8,112.6 387.2,108.2 391.2,104.4 394.9,101.3 398.2,98.7 401.1,96.4 403.8,94.4 406.3,92.8 408.5,91.3 410.6,89.9 412.5,88.8 414.4,87.7 416.1,86.7 417.7,85.8 419.2,85.0 420.7,84.2 422.2,83.5 423.6,82.8 425.0,82.1 426.4,81.5 427.9,80.8 429.3,80.2 430.7,79.6 432.2,79.0 433.7,78.4 435.3,77.8 437.0,77.2 438.7,76.5 440.6,75.9 442.6,75.2 444.8,74.6 447.2,73.9 449.8,73.2 452.8,72.5 456.1,71.7 459.8,71.0 464.1,70.3 468.9,69.6 474.5,69.1 480.9,68.8 488.2,68.8 496.5,69.2 505.8,70.3 516.1,72.2 527.3,75.2 539.1,79.4 551.3,85.1 563.7,92.4" fill="#f12d5f"/><polygon points="575.9,101.3 585.7,111.8 591.6,123.2 594.4,134.9 594.4,146.7 592.3,158.1 588.4,169.1 583.1,179.5 576.8,189.2 569.7,198.3 561.9,206.8 553.5,214.7 544.7,221.9 535.6,228.6 526.1,234.7 516.4,240.4 506.4,245.4 496.2,250.0 485.8,254.1 475.1,257.6 464.2,260.5 453.1,262.9 441.8,264.6 430.4,265.5 418.8,265.7 407.3,264.9 395.8,263.0 384.6,259.9 373.9,255.4 364.0,249.2 355.4,241.2 348.6,231.1 344.3,218.8 343.4,204.3 345.0,189.3 348.0,175.3 352.0,162.4 356.8,150.9 362.0,140.7 367.4,131.9 372.8,124.4 377.9,118.0 382.8,112.6 387.2,108.2 391.2,104.4 394.9,101.3 398.2,98.7 401.1,96.4 403.8,94.4 406.3,92.8 408.5,91.3 410.6,89.9 412.5,88.8 414.4,87.7 416.1,86.7 417.7,85.8 419.2,85.0 420.7,84.2 422.2,83.5 423.6,82.8 425.0,82.1 426.4,81.5 427.9,80.8 429.3,80.2 430.7,79.6 432.2,79.0 433.7,78.4 435.3,77.8 437.0,77.2 438.7,76.5 440.6,75.9 442.6,75.2 444.8,74.6 447.2,73.9 449.8,73.2 452.8,72.5 456.1,71.7 459.8,71.0 464.1,70.3 468.9,69.6 474.5,69.1 480.9,68.8 488.2,68.8 496.5,69.2 505.8,70.3 516.1,72.2 527.3,75.2 539.1,79.4 551.3,85.1 563.7,92.4" fill="#f52e60"/><polygon points="575.6,101.3 584.4,111.7 589.6,122.9 591.7,134.4 591.4,145.8 589.0,156.9 584.9,167.6 579.6,177.6 573.3,187.0 566.3,195.8 558.6,204.0 550.4,211.6 541.8,218.6 532.9,225.1 523.6,231.1 514.2,236.5 504.5,241.4 494.5,245.9 484.4,249.8 474.0,253.2 463.4,256.2 452.6,258.5 441.7,260.2 430.5,261.2 419.3,261.5 408.0,260.8 396.8,259.2 385.7,256.4 375.2,252.2 365.4,246.4 356.7,238.9 349.7,229.4 345.1,217.8 343.5,204.2 345.0,189.3 348.0,175.3 352.0,162.4 356.8,150.9 362.0,140.7 367.4,131.9 372.8,124.4 377.9,118.0 382.8,112.6 387.2,108.2 391.2,104.4 394.9,101.3 398.2,98.7 401.1,96.4 403.8,94.4 406.3,92.8 408.5,91.3 410.6,89.9 412.5,88.8 414.4,87.7 416.1,86.7 417.7,85.8 419.2,85.0 420.7,84.2 422.2,83.5 423.6,82.8 425.0,82.1 426.4,81.5 427.9,80.8 429.3,80.2 430.7,79.6 432.2,79.0 433.7,78.4 435.3,77.8 437.0,77.2 438.7,76.5 440.6,75.9 442.6,75.2 444.8,74.6 447.2,73.9 449.8,73.2 452.8,72.5 456.1,71.7 459.8,71.0 464.1,70.3 468.9,69.6 474.5,69.1 480.9,68.8 488.2,68.8 496.5,69.2 505.8,70.3 516.1,72.2 527.3,75.2 539.1,79.4 551.3,85.1 563.7,92.4" fill="#f82f62"/><polygon points="575.0,101.3 582.8,111.6 587.3,122.5 588.9,133.8 588.1,144.9 585.5,155.7 581.3,166.0 576.0,175.7 569.7,184.8 562.7,193.3 555.1,201.2 547.1,208.5 538.7,215.3 530.0,221.5 521.1,227.3 511.9,232.5 502.5,237.3 492.8,241.6 483.0,245.5 472.9,248.8 462.6,251.7 452.2,254.0 441.5,255.7 430.7,256.8 419.7,257.1 408.7,256.6 397.8,255.2 387.0,252.6 376.5,248.8 366.8,243.4 358.1,236.4 351.0,227.5 346.0,216.6 343.9,203.8 345.0,189.3 348.0,175.3 352.0,162.4 356.8,150.9 362.0,140.7 367.4,131.9 372.8,124.4 377.9,118.0 382.8,112.6 387.2,108.2 391.2,104.4 394.9,101.3 398.2,98.7 401.1,96.4 403.8,94.4 406.3,92.8 408.5,91.3 410.6,89.9 412.5,88.8 414.4,87.7 416.1,86.7 417.7,85.8 419.2,85.0 420.7,84.2 422.2,83.5 423.6,82.8 425.0,82.1 426.4,81.5 427.9,80.8 429.3,80.2 430.7,79.6 432.2,79.0 433.7,78.4 435.3,77.8 437.0,77.2 438.7,76.5 440.6,75.9 442.6,75.2 444.8,74.6 447.2,73.9 449.8,73.2 452.8,72.5 456.1,71.7 459.8,71.0 464.1,70.3 468.9,69.6 474.5,69.1 480.9,68.8 488.2,68.8 496.5,69.2 505.8,70.3 516.1,72.2 527.3,75.2 539.1,79.4 551.3,85.1 563.7,92.4" fill="#fb2f63"/><polygon points="574.0,101.3 580.9,111.4 584.7,122.2 585.8,133.1 584.7,143.9 581.8,154.3 577.6,164.3 572.2,173.7 566.0,182.4 559.1,190.6 551.6,198.2 543.8,205.3 535.6,211.8 527.2,217.8 518.5,223.4 509.5,228.4 500.4,233.1 491.0,237.2 481.5,241.0 471.8,244.3 461.8,247.1 451.7,249.4 441.4,251.1 430.9,252.2 420.2,252.7 409.5,252.3 398.8,251.0 388.2,248.7 378.0,245.2 368.4,240.2 359.7,233.7 352.4,225.4 347.1,215.2 344.5,203.1 345.0,189.3 348.0,175.3 352.0,162.4 356.8,150.9 362.0,140.7 367.4,131.9 372.8,124.4 377.9,118.0 382.8,112.6 387.2,108.2 391.2,104.4 394.9,101.3 398.2,98.7 401.1,96.4 403.8,94.4 406.3,92.8 408.5,91.3 410.6,89.9 412.5,88.8 414.4,87.7 416.1,86.7 417.7,85.8 419.2,85.0 420.7,84.2 422.2,83.5 423.6,82.8 425.0,82.1 426.4,81.5 427.9,80.8 429.3,80.2 430.7,79.6 432.2,79.0 433.7,78.4 435.3,77.8 437.0,77.2 438.7,76.5 440.6,75.9 442.6,75.2 444.8,74.6 447.2,73.9 449.8,73.2 452.8,72.5 456.1,71.7 459.8,71.0 464.1,70.3 468.9,69.6 474.5,69.1 480.9,68.8 488.2,68.8 496.5,69.2 505.8,70.3 516.1,72.2 527.3,75.2 539.1,79.4 551.3,85.1 563.7,92.4" fill="#ff3064"/><polygon points="572.6,101.3 578.7,111.3 581.8,121.8 582.5,132.4 581.0,142.9 578.0,152.9 573.6,162.5 568.2,171.6 562.1,180.0 555.3,187.9 548.0,195.2 540.4,202.0 532.4,208.3 524.2,214.0 515.8,219.4 507.1,224.3 498.3,228.7 489.2,232.8 480.0,236.4 470.6,239.6 461.0,242.3 451.2,244.6 441.2,246.3 431.0,247.5 420.7,248.0 410.3,247.8 399.9,246.7 389.6,244.6 379.5,241.4 370.0,236.9 361.4,230.8 354.0,223.0 348.5,213.5 345.3,202.1 345.2,189.1 348.0,175.3 352.0,162.4 356.8,150.9 362.0,140.7 367.4,131.9 372.8,124.4 377.9,118.0 382.8,112.6 387.2,108.2 391.2,104.4 394.9,101.3 398.2,98.7 401.1,96.4 403.8,94.4 406.3,92.8 408.5,91.3 410.6,89.9 412.5,88.8 414.4,87.7 416.1,86.7 417.7,85.8 419.2,85.0 420.7,84.2 422.2,83.5 423.6,82.8 425.0,82.1 426.4,81.5 427.9,80.8 429.3,80.2 430.7,79.6 432.2,79.0 433.7,78.4 435.3,77.8 437.0,77.2 438.7,76.5 440.6,75.9 442.6,75.2 444.8,74.6 447.2,73.9 449.8,73.2 452.8,72.5 456.1,71.7 459.8,71.0 464.1,70.3 468.9,69.6 474.5,69.1 480.9,68.8 488.2,68.8 496.5,69.2 505.8,70.3 516.1,72.2 527.3,75.2 539.1,79.4 551.3,85.1 563.4,92.4" fill="#ff3165"/><polygon points="570.9,101.3 576.1,111.1 578.7,121.3 578.9,131.7 577.2,141.8 574.0,151.5 569.5,160.7 564.1,169.4 558.0,177.5 551.4,185.1 544.3,192.1 536.9,198.6 529.1,204.6 521.2,210.2 513.0,215.3 504.6,220.0 496.1,224.3 487.4,228.2 478.5,231.7 469.4,234.8 460.1,237.5 450.7,239.7 441.0,241.4 431.2,242.6 421.2,243.2 411.1,243.1 401.0,242.2 390.9,240.4 381.1,237.5 371.8,233.3 363.2,227.7 355.7,220.5 350.0,211.6 346.4,200.9 345.7,188.7 348.0,175.3 352.0,162.4 356.8,150.9 362.0,140.7 367.4,131.9 372.8,124.4 377.9,118.0 382.8,112.6 387.2,108.2 391.2,104.4 394.9,101.3 398.2,98.7 401.1,96.4 403.8,94.4 406.3,92.8 408.5,91.3 410.6,89.9 412.5,88.8 414.4,87.7 416.1,86.7 417.7,85.8 419.2,85.0 420.7,84.2 422.2,83.5 423.6,82.8 425.0,82.1 426.4,81.5 427.9,80.8 429.3,80.2 430.7,79.6 432.2,79.0 433.7,78.4 435.3,77.8 437.0,77.2 438.7,76.5 440.6,75.9 442.6,75.2 444.8,74.6 447.2,73.9 449.8,73.2 452.8,72.5 456.1,71.7 459.8,71.0 464.1,70.3 468.9,69.6 474.5,69.1 480.9,68.8 488.2,68.8 496.5,69.2 505.8,70.3 516.1,72.2 527.3,75.2 539.1,79.4 551.3,85.1 562.6,92.5" fill="#ff3167"/><polygon points="568.8,101.3 573.3,110.9 575.3,120.9 575.1,130.8 573.1,140.6 569.7,149.9 565.2,158.8 559.9,167.1 553.9,174.9 547.4,182.1 540.4,188.8 533.2,195.1 525.7,200.8 518.0,206.2 510.2,211.1 502.1,215.6 493.9,219.7 485.5,223.5 476.9,226.9 468.2,229.9 459.3,232.5 450.1,234.7 440.8,236.4 431.4,237.6 421.7,238.3 412.0,238.3 402.2,237.6 392.4,235.9 382.8,233.3 373.6,229.5 365.1,224.3 357.6,217.7 351.7,209.4 347.8,199.4 346.4,187.9 348.0,175.2 352.0,162.4 356.8,150.9 362.0,140.7 367.4,131.9 372.8,124.4 377.9,118.0 382.8,112.6 387.2,108.2 391.2,104.4 394.9,101.3 398.2,98.7 401.1,96.4 403.8,94.4 406.3,92.8 408.5,91.3 410.6,89.9 412.5,88.8 414.4,87.7 416.1,86.7 417.7,85.8 419.2,85.0 420.7,84.2 422.2,83.5 423.6,82.8 425.0,82.1 426.4,81.5 427.9,80.8 429.3,80.2 430.7,79.6 432.2,79.0 433.7,78.4 435.3,77.8 437.0,77.2 438.7,76.5 440.6,75.9 442.6,75.2 444.8,74.6 447.2,73.9 449.8,73.2 452.8,72.5 456.1,71.7 459.8,71.0 464.1,70.3 468.9,69.6 474.5,69.1 480.9,68.8 488.2,68.8 496.5,69.2 505.8,70.3 516.1,72.2 527.3,75.2 539.1,79.4 551.2,85.1 561.4,92.5" fill="#ff3268"/><polygon points="566.3,101.3 570.1,110.7 571.6,120.3 571.0,130.0 568.8,139.4 565.3,148.3 560.8,156.8 555.5,164.8 549.6,172.2 543.2,179.1 536.5,185.5 529.5,191.5 522.3,197.0 514.8,202.0 507.2,206.7 499.5,211.1 491.6,215.0 483.5,218.6 475.3,221.9 466.9,224.8 458.3,227.3 449.6,229.5 440.7,231.2 431.5,232.5 422.3,233.2 412.9,233.3 403.4,232.7 393.9,231.3 384.6,229.0 375.6,225.5 367.2,220.8 359.7,214.6 353.6,206.9 349.4,197.6 347.5,186.9 348.4,174.9 352.0,162.4 356.8,150.9 362.0,140.7 367.4,131.9 372.8,124.4 377.9,118.0 382.8,112.6 387.2,108.2 391.2,104.4 394.9,101.3 398.2,98.7 401.1,96.4 403.8,94.4 406.3,92.8 408.5,91.3 410.6,89.9 412.5,88.8 414.4,87.7 416.1,86.7 417.7,85.8 419.2,85.0 420.7,84.2 422.2,83.5 423.6,82.8 425.0,82.1 426.4,81.5 427.9,80.8 429.3,80.2 430.7,79.6 432.2,79.0 433.7,78.4 435.3,77.8 437.0,77.2 438.7,76.5 440.6,75.9 442.6,75.2 444.8,74.6 447.2,73.9 449.8,73.2 452.8,72.5 456.1,71.7 459.8,71.0 464.1,70.3 468.9,69.6 474.5,69.1 480.9,68.8 488.2,68.8 496.5,69.2 505.8,70.3 516.1,72.2 527.3,75.2 539.1,79.4 550.6,85.2 559.8,92.7" fill="#ff3269"/><polygon points="563.4,101.3 566.6,110.4 567.6,119.8 566.7,129.1 564.3,138.0 560.7,146.6 556.1,154.7 550.9,162.3 545.1,169.4 538.9,176.0 532.4,182.1 525.6,187.7 518.7,193.0 511.5,197.8 504.2,202.3 496.8,206.4 489.2,210.2 481.5,213.6 473.6,216.8 465.6,219.6 457.4,222.0 449.0,224.1 440.5,225.8 431.7,227.1 422.8,227.9 413.8,228.1 404.6,227.7 395.5,226.5 386.4,224.4 377.6,221.3 369.4,217.0 361.9,211.3 355.7,204.2 351.3,195.6 348.9,185.5 349.1,174.3 352.0,162.4 356.8,150.9 362.0,140.7 367.4,131.9 372.8,124.4 377.9,118.0 382.8,112.6 387.2,108.2 391.2,104.4 394.9,101.3 398.2,98.7 401.1,96.4 403.8,94.4 406.3,92.8 408.5,91.3 410.6,89.9 412.5,88.8 414.4,87.7 416.1,86.7 417.7,85.8 419.2,85.0 420.7,84.2 422.2,83.5 423.6,82.8 425.0,82.1 426.4,81.5 427.9,80.8 429.3,80.2 430.7,79.6 432.2,79.0 433.7,78.4 435.3,77.8 437.0,77.2 438.7,76.5 440.6,75.9 442.6,75.2 444.8,74.6 447.2,73.9 449.8,73.2 452.8,72.5 456.1,71.7 459.8,71.0 464.1,70.3 468.9,69.6 474.5,69.1 480.9,68.8 488.2,68.8 496.5,69.2 505.8,70.3 516.1,72.2 527.3,75.2 539.0,79.4 549.6,85.4 557.8,92.8" fill="#ff336b"/><polygon points="560.2,101.3 562.8,110.2 563.3,119.2 562.1,128.1 559.5,136.7 555.8,144.9 551.3,152.6 546.1,159.8 540.5,166.5 534.4,172.7 528.2,178.5 521.6,183.9 515.0,188.9 508.1,193.5 501.1,197.7 494.0,201.6 486.8,205.2 479.4,208.5 471.9,211.5 464.3,214.2 456.5,216.6 448.5,218.6 440.3,220.3 431.9,221.6 423.4,222.4 414.7,222.7 405.9,222.4 397.1,221.4 388.3,219.6 379.8,216.8 371.7,212.9 364.3,207.7 358.1,201.2 353.4,193.2 350.6,183.9 350.2,173.4 352.4,162.2 356.8,150.9 362.0,140.7 367.4,131.9 372.8,124.4 377.9,118.0 382.8,112.6 387.2,108.2 391.2,104.4 394.9,101.3 398.2,98.7 401.1,96.4 403.8,94.4 406.3,92.8 408.5,91.3 410.6,89.9 412.5,88.8 414.4,87.7 416.1,86.7 417.7,85.8 419.2,85.0 420.7,84.2 422.2,83.5 423.6,82.8 425.0,82.1 426.4,81.5 427.9,80.8 429.3,80.2 430.7,79.6 432.2,79.0 433.7,78.4 435.3,77.8 437.0,77.2 438.7,76.5 440.6,75.9 442.6,75.2 444.8,74.6 447.2,73.9 449.8,73.2 452.8,72.5 456.1,71.7 459.8,71.0 464.1,70.3 468.9,69.6 474.5,69.1 480.9,68.8 488.2,68.8 496.5,69.2 505.8,70.3 516.1,72.2 527.3,75.2 538.5,79.5 548.0,85.6 555.3,93.0" fill="#ff346c"/><polygon points="556.6,101.3 558.5,109.9 558.6,118.5 557.2,127.0 554.4,135.2 550.7,143.0 546.2,150.3 541.1,157.1 535.6,163.5 529.8,169.4 523.8,174.9 517.5,179.9 511.1,184.6 504.6,189.0 498.0,193.0 491.2,196.7 484.3,200.1 477.3,203.3 470.2,206.1 462.9,208.7 455.5,211.0 447.9,213.0 440.1,214.6 432.1,215.9 424.0,216.7 415.7,217.1 407.3,217.0 398.8,216.1 390.4,214.6 382.1,212.1 374.2,208.6 366.9,203.9 360.6,197.9 355.7,190.6 352.6,181.9 351.7,172.1 353.1,161.6 356.8,150.9 362.0,140.7 367.4,131.9 372.8,124.4 377.9,118.0 382.8,112.6 387.2,108.2 391.2,104.4 394.9,101.3 398.2,98.7 401.1,96.4 403.8,94.4 406.3,92.8 408.5,91.3 410.6,89.9 412.5,88.8 414.4,87.7 416.1,86.7 417.7,85.8 419.2,85.0 420.7,84.2 422.2,83.5 423.6,82.8 425.0,82.1 426.4,81.5 427.9,80.8 429.3,80.2 430.7,79.6 432.2,79.0 433.7,78.4 435.3,77.8 437.0,77.2 438.7,76.5 440.6,75.9 442.6,75.2 444.8,74.6 447.2,73.9 449.8,73.2 452.8,72.5 456.1,71.7 459.8,71.0 464.1,70.3 468.9,69.6 474.5,69.1 480.9,68.8 488.2,68.8 496.5,69.2 505.8,70.3 516.1,72.2 527.2,75.2 537.5,79.8 546.0,85.9 552.4,93.2" fill="#ff346d"/><polygon points="552.5,101.3 554.0,109.5 553.7,117.8 551.9,125.9 549.1,133.7 545.3,141.0 540.9,147.9 535.9,154.4 530.6,160.4 525.0,165.9 519.2,171.1 513.3,175.8 507.2,180.2 501.0,184.3 494.7,188.1 488.3,191.6 481.8,194.9 475.1,197.8 468.4,200.5 461.5,203.0 454.4,205.2 447.2,207.1 439.9,208.7 432.3,210.0 424.6,210.9 416.7,211.3 408.7,211.3 400.6,210.6 392.5,209.3 384.5,207.1 376.8,204.0 369.7,199.8 363.4,194.3 358.4,187.6 355.0,179.6 353.6,170.6 354.4,160.7 357.3,150.6 362.0,140.7 367.4,131.9 372.8,124.4 377.9,118.0 382.8,112.6 387.2,108.2 391.2,104.4 394.9,101.3 398.2,98.7 401.1,96.4 403.8,94.4 406.3,92.8 408.5,91.3 410.6,89.9 412.5,88.8 414.4,87.7 416.1,86.7 417.7,85.8 419.2,85.0 420.7,84.2 422.2,83.5 423.6,82.8 425.0,82.1 426.4,81.5 427.9,80.8 429.3,80.2 430.7,79.6 432.2,79.0 433.7,78.4 435.3,77.8 437.0,77.2 438.7,76.5 440.6,75.9 442.6,75.2 444.8,74.6 447.2,73.9 449.8,73.2 452.8,72.5 456.1,71.7 459.8,71.0 464.1,70.3 468.9,69.6 474.5,69.1 480.9,68.8 488.2,68.8 496.5,69.2 505.8,70.3 516.1,72.2 526.5,75.4 535.9,80.1 543.5,86.2 549.1,93.4" fill="#ff356f"/><polygon points="548.0,101.3 549.0,109.2 548.3,117.1 546.4,124.7 543.4,132.1 539.7,139.0 535.3,145.5 530.5,151.5 525.4,157.1 520.1,162.3 514.5,167.1 508.9,171.6 503.1,175.7 497.2,179.5 491.3,183.1 485.2,186.4 479.1,189.4 472.9,192.2 466.5,194.8 460.0,197.1 453.4,199.2 446.6,201.0 439.7,202.6 432.5,203.8 425.3,204.7 417.8,205.3 410.2,205.3 402.5,204.8 394.7,203.7 387.1,201.9 379.7,199.1 372.7,195.3 366.5,190.4 361.4,184.3 357.7,177.0 355.9,168.7 356.0,159.5 358.3,150.0 362.2,140.6 367.4,131.9 372.8,124.4 377.9,118.0 382.8,112.6 387.2,108.2 391.2,104.4 394.9,101.3 398.2,98.7 401.1,96.4 403.8,94.4 406.3,92.8 408.5,91.3 410.6,89.9 412.5,88.8 414.4,87.7 416.1,86.7 417.7,85.8 419.2,85.0 420.7,84.2 422.2,83.5 423.6,82.8 425.0,82.1 426.4,81.5 427.9,80.8 429.3,80.2 430.7,79.6 432.2,79.0 433.7,78.4 435.3,77.8 437.0,77.2 438.7,76.5 440.6,75.9 442.6,75.2 444.8,74.6 447.2,73.9 449.8,73.2 452.8,72.5 456.1,71.7 459.8,71.0 464.1,70.3 468.9,69.6 474.5,69.1 480.9,68.8 488.2,68.8 496.5,69.2 505.8,70.3 515.8,72.3 525.3,75.7 533.7,80.6 540.5,86.6 545.3,93.7" fill="#ff3670"/><polygon points="543.1,101.3 543.6,108.8 542.6,116.3 540.5,123.5 537.4,130.4 533.7,136.8 529.5,142.9 524.9,148.5 520.0,153.7 514.9,158.5 509.7,163.0 504.3,167.2 498.9,171.0 493.4,174.6 487.8,177.9 482.1,180.9 476.4,183.8 470.5,186.4 464.6,188.8 458.5,191.0 452.3,193.0 445.9,194.7 439.4,196.2 432.8,197.5 425.9,198.4 418.9,199.0 411.7,199.1 404.5,198.8 397.1,197.9 389.8,196.3 382.7,193.9 375.9,190.6 369.8,186.2 364.6,180.7 360.8,174.1 358.5,166.4 358.2,157.9 359.8,149.0 363.0,140.2 367.6,131.8 372.8,124.4 377.9,118.0 382.8,112.6 387.2,108.2 391.2,104.4 394.9,101.3 398.2,98.7 401.1,96.4 403.8,94.4 406.3,92.8 408.5,91.3 410.6,89.9 412.5,88.8 414.4,87.7 416.1,86.7 417.7,85.8 419.2,85.0 420.7,84.2 422.2,83.5 423.6,82.8 425.0,82.1 426.4,81.5 427.9,80.8 429.3,80.2 430.7,79.6 432.2,79.0 433.7,78.4 435.3,77.8 437.0,77.2 438.7,76.5 440.6,75.9 442.6,75.2 444.8,74.6 447.2,73.9 449.8,73.2 452.8,72.5 456.1,71.7 459.8,71.0 464.1,70.3 468.9,69.6 474.5,69.1 480.9,68.8 488.2,68.8 496.5,69.2 505.6,70.4 514.9,72.6 523.5,76.2 531.0,81.1 536.9,87.1 540.9,94.0" fill="#ff3671"/><polygon points="537.6,101.3 537.7,108.4 536.4,115.4 534.2,122.1 531.1,128.5 527.5,134.5 523.4,140.1 519.0,145.3 514.3,150.2 509.5,154.6 504.6,158.7 499.6,162.6 494.5,166.1 489.3,169.4 484.1,172.5 478.8,175.3 473.5,177.9 468.1,180.4 462.5,182.6 456.9,184.7 451.2,186.5 445.3,188.2 439.2,189.6 433.0,190.8 426.6,191.7 420.1,192.4 413.4,192.6 406.5,192.4 399.6,191.7 392.7,190.4 385.9,188.3 379.4,185.4 373.4,181.6 368.3,176.7 364.2,170.7 361.7,163.8 360.9,156.0 361.8,147.7 364.4,139.4 368.3,131.5 372.9,124.3 377.9,118.0 382.8,112.6 387.2,108.2 391.2,104.4 394.9,101.3 398.2,98.7 401.1,96.4 403.8,94.4 406.3,92.8 408.5,91.3 410.6,89.9 412.5,88.8 414.4,87.7 416.1,86.7 417.7,85.8 419.2,85.0 420.7,84.2 422.2,83.5 423.6,82.8 425.0,82.1 426.4,81.5 427.9,80.8 429.3,80.2 430.7,79.6 432.2,79.0 433.7,78.4 435.3,77.8 437.0,77.2 438.7,76.5 440.6,75.9 442.6,75.2 444.8,74.6 447.2,73.9 449.8,73.2 452.8,72.5 456.1,71.7 459.8,71.0 464.1,70.3 468.9,69.6 474.5,69.1 480.9,68.8 488.2,68.8 496.3,69.3 504.9,70.7 513.3,73.2 521.1,76.9 527.7,81.8 532.7,87.7 536.0,94.3" fill="#ff3772"/><polygon points="531.6,101.3 531.2,108.0 529.8,114.5 527.4,120.7 524.4,126.6 520.8,132.1 516.9,137.3 512.7,142.0 508.4,146.4 503.9,150.5 499.3,154.3 494.6,157.8 489.9,161.0 485.1,164.0 480.3,166.8 475.5,169.4 470.5,171.9 465.5,174.1 460.5,176.2 455.3,178.1 450.0,179.8 444.5,181.4 439.0,182.7 433.2,183.9 427.4,184.8 421.3,185.4 415.1,185.7 408.7,185.7 402.2,185.2 395.8,184.1 389.3,182.4 383.1,179.9 377.3,176.5 372.3,172.2 368.2,166.9 365.4,160.7 364.1,153.6 364.5,146.1 366.4,138.4 369.6,130.9 373.7,124.0 378.2,117.9 382.8,112.6 387.2,108.2 391.2,104.4 394.9,101.3 398.2,98.7 401.1,96.4 403.8,94.4 406.3,92.8 408.5,91.3 410.6,89.9 412.5,88.8 414.4,87.7 416.1,86.7 417.7,85.8 419.2,85.0 420.7,84.2 422.2,83.5 423.6,82.8 425.0,82.1 426.4,81.5 427.9,80.8 429.3,80.2 430.7,79.6 432.2,79.0 433.7,78.4 435.3,77.8 437.0,77.2 438.7,76.5 440.6,75.9 442.6,75.2 444.8,74.6 447.2,73.9 449.8,73.2 452.8,72.5 456.1,71.7 459.8,71.0 464.1,70.3 468.9,69.6 474.5,69.1 480.8,68.8 487.9,68.9 495.6,69.7 503.4,71.3 511.1,74.0 518.0,77.8 523.7,82.7 527.9,88.4 530.5,94.7" fill="#ff3774"/><polygon points="524.9,101.3 524.2,107.5 522.6,113.5 520.2,119.2 517.2,124.6 513.8,129.6 510.1,134.2 506.1,138.5 502.1,142.5 497.9,146.2 493.7,149.6 489.4,152.8 485.1,155.7 480.7,158.4 476.4,160.9 471.9,163.3 467.4,165.5 462.9,167.5 458.3,169.4 453.5,171.2 448.7,172.8 443.8,174.2 438.7,175.5 433.5,176.6 428.1,177.5 422.6,178.1 416.9,178.5 411.0,178.5 405.1,178.2 399.0,177.4 393.0,176.0 387.2,173.9 381.7,171.0 376.7,167.3 372.6,162.7 369.6,157.1 367.9,150.8 367.8,144.0 369.1,136.9 371.7,130.0 375.2,123.5 379.2,117.6 383.3,112.5 387.4,108.2 391.3,104.4 394.9,101.3 398.2,98.7 401.1,96.4 403.8,94.4 406.3,92.8 408.5,91.3 410.6,89.9 412.5,88.8 414.4,87.7 416.1,86.7 417.7,85.8 419.2,85.0 420.7,84.2 422.2,83.5 423.6,82.8 425.0,82.1 426.4,81.5 427.9,80.8 429.3,80.2 430.7,79.6 432.2,79.0 433.7,78.4 435.3,77.8 437.0,77.2 438.7,76.5 440.6,75.9 442.6,75.2 444.8,74.6 447.2,73.9 449.8,73.2 452.8,72.5 456.1,71.7 459.8,71.0 464.0,70.3 468.9,69.7 474.3,69.3 480.4,69.2 487.0,69.5 494.1,70.5 501.3,72.3 508.1,75.1 514.1,78.9 519.0,83.7 522.4,89.2 524.3,95.1" fill="#ff3875"/><polygon points="517.4,101.3 516.5,106.9 514.8,112.4 512.3,117.5 509.5,122.3 506.2,126.8 502.8,131.0 499.1,134.8 495.4,138.4 491.6,141.6 487.8,144.7 483.9,147.5 480.0,150.1 476.1,152.5 472.2,154.7 468.2,156.8 464.2,158.8 460.1,160.6 456.0,162.3 451.7,163.9 447.4,165.4 443.0,166.7 438.4,167.9 433.8,168.9 428.9,169.7 423.9,170.4 418.8,170.8 413.5,170.9 408.1,170.7 402.6,170.1 397.0,169.0 391.6,167.3 386.4,165.0 381.6,161.8 377.6,157.9 374.4,153.1 372.5,147.5 371.9,141.4 372.7,135.1 374.6,128.7 377.4,122.7 380.9,117.1 384.6,112.3 388.3,108.0 391.9,104.4 395.3,101.3 398.4,98.7 401.3,96.4 403.9,94.5 406.4,92.8 408.6,91.3 410.6,90.0 412.6,88.8 414.4,87.7 416.1,86.7 417.7,85.8 419.2,85.0 420.7,84.2 422.2,83.5 423.6,82.8 425.0,82.1 426.4,81.5 427.9,80.8 429.3,80.2 430.7,79.6 432.2,79.0 433.7,78.4 435.3,77.8 437.0,77.2 438.7,76.5 440.6,75.9 442.6,75.3 444.8,74.6 447.2,73.9 449.8,73.2 452.7,72.5 456.0,71.9 459.6,71.2 463.8,70.6 468.4,70.1 473.6,69.9 479.3,69.9 485.5,70.5 491.9,71.7 498.3,73.6 504.2,76.5 509.3,80.3 513.3,84.9 516.0,90.1 517.3,95.6" fill="#ff3976"/><polygon points="509.1,101.3 508.0,106.3 506.1,111.1 503.8,115.7 501.1,119.9 498.1,123.9 494.9,127.5 491.6,130.8 488.3,133.9 484.9,136.8 481.5,139.4 478.1,141.8 474.6,144.1 471.2,146.2 467.7,148.2 464.2,150.0 460.7,151.7 457.1,153.3 453.5,154.8 449.8,156.2 446.0,157.5 442.2,158.7 438.2,159.7 434.1,160.7 429.8,161.5 425.4,162.1 420.9,162.5 416.2,162.8 411.3,162.7 406.4,162.3 401.4,161.4 396.4,160.1 391.7,158.2 387.2,155.7 383.3,152.4 380.1,148.3 378.0,143.6 377.0,138.3 377.2,132.7 378.5,127.0 380.7,121.5 383.6,116.4 386.8,111.8 390.1,107.8 393.3,104.3 396.4,101.3 399.4,98.7 402.1,96.5 404.6,94.6 406.9,92.9 409.0,91.4 411.0,90.1 412.9,89.0 414.7,87.9 416.3,86.9 417.9,86.0 419.4,85.2 420.9,84.4 422.4,83.7 423.8,83.0 425.2,82.3 426.6,81.7 427.9,81.1 429.3,80.4 430.8,79.8 432.2,79.2 433.7,78.6 435.3,78.1 437.0,77.5 438.7,76.9 440.5,76.3 442.5,75.6 444.7,75.0 447.0,74.4 449.6,73.7 452.4,73.1 455.5,72.5 459.1,72.0 463.0,71.5 467.3,71.2 472.2,71.1 477.4,71.3 483.0,72.0 488.7,73.3 494.3,75.4 499.3,78.3 503.5,82.0 506.7,86.3 508.6,91.1 509.4,96.2" fill="#ff3978"/><polygon points="499.6,101.3 498.4,105.7 496.5,109.8 494.3,113.7 491.8,117.3 489.1,120.6 486.4,123.7 483.5,126.5 480.6,129.1 477.6,131.5 474.7,133.7 471.8,135.7 468.8,137.6 465.9,139.4 462.9,141.1 460.0,142.6 457.0,144.1 453.9,145.4 450.9,146.7 447.7,147.9 444.5,149.0 441.2,150.0 437.9,150.9 434.4,151.8 430.7,152.5 427.0,153.1 423.1,153.6 419.1,153.8 414.9,153.9 410.6,153.6 406.2,153.1 401.9,152.1 397.6,150.6 393.5,148.6 389.8,146.0 386.8,142.7 384.5,138.8 383.2,134.4 382.9,129.6 383.7,124.7 385.3,119.8 387.5,115.2 390.1,111.1 393.0,107.4 395.8,104.1 398.6,101.3 401.2,98.9 403.7,96.7 406.0,94.9 408.1,93.3 410.2,91.9 412.0,90.6 413.8,89.4 415.5,88.4 417.1,87.5 418.6,86.6 420.1,85.8 421.5,85.0 422.9,84.3 424.2,83.6 425.6,83.0 426.9,82.4 428.2,81.8 429.6,81.2 431.0,80.6 432.4,80.0 433.8,79.5 435.3,78.9 436.9,78.3 438.6,77.8 440.4,77.2 442.3,76.6 444.3,76.1 446.6,75.5 449.0,74.9 451.7,74.4 454.6,73.9 457.9,73.4 461.5,73.1 465.5,72.9 469.9,73.0 474.6,73.4 479.5,74.2 484.4,75.7 489.0,77.8 493.1,80.6 496.4,84.0 498.7,88.0 499.9,92.3 500.2,96.8" fill="#ff3a79"/><polygon points="488.6,101.3 487.3,104.9 485.5,108.3 483.6,111.4 481.4,114.3 479.1,117.0 476.8,119.4 474.4,121.6 472.0,123.7 469.6,125.6 467.2,127.4 464.8,129.0 462.4,130.5 460.0,131.9 457.7,133.2 455.3,134.5 452.9,135.6 450.4,136.7 448.0,137.7 445.5,138.7 442.9,139.6 440.2,140.5 437.5,141.2 434.7,141.9 431.8,142.6 428.8,143.1 425.6,143.5 422.3,143.8 418.9,143.9 415.4,143.8 411.8,143.5 408.1,142.9 404.4,141.9 400.9,140.4 397.6,138.5 394.8,136.0 392.5,133.0 391.1,129.5 390.4,125.6 390.6,121.6 391.6,117.5 393.2,113.6 395.2,110.0 397.4,106.7 399.8,103.8 402.1,101.3 404.4,99.1 406.5,97.1 408.5,95.4 410.5,93.9 412.3,92.6 414.0,91.4 415.6,90.4 417.1,89.4 418.5,88.5 419.9,87.7 421.3,87.0 422.6,86.2 423.8,85.6 425.1,85.0 426.3,84.3 427.6,83.8 428.8,83.2 430.1,82.7 431.3,82.1 432.7,81.6 434.0,81.1 435.4,80.6 436.9,80.1 438.4,79.6 440.0,79.1 441.8,78.6 443.7,78.1 445.7,77.6 447.9,77.1 450.3,76.7 453.0,76.3 455.9,76.0 459.1,75.8 462.6,75.7 466.4,75.9 470.3,76.5 474.4,77.4 478.3,78.9 481.9,80.9 485.0,83.5 487.3,86.6 488.8,90.1 489.5,93.8 489.4,97.6" fill="#ff3b7a"/><polygon points="474.9,101.3 473.7,103.9 472.3,106.4 470.7,108.7 469.0,110.7 467.2,112.6 465.5,114.4 463.7,116.0 461.9,117.4 460.2,118.8 458.4,120.0 456.7,121.1 455.0,122.2 453.2,123.2 451.5,124.2 449.8,125.0 448.1,125.9 446.4,126.6 444.6,127.4 442.8,128.1 441.0,128.7 439.1,129.4 437.1,129.9 435.1,130.5 433.0,130.9 430.8,131.4 428.5,131.7 426.2,132.0 423.7,132.2 421.1,132.2 418.4,132.1 415.6,131.7 412.8,131.2 410.1,130.3 407.4,129.0 405.0,127.4 403.1,125.3 401.6,122.9 400.7,120.2 400.5,117.2 400.8,114.2 401.7,111.2 403.0,108.3 404.6,105.7 406.3,103.4 408.0,101.3 409.8,99.5 411.4,97.8 413.1,96.4 414.6,95.1 416.1,94.0 417.5,93.0 418.8,92.1 420.0,91.3 421.2,90.5 422.4,89.8 423.5,89.2 424.6,88.5 425.7,88.0 426.8,87.4 427.8,86.9 428.9,86.4 429.9,86.0 431.0,85.5 432.1,85.1 433.2,84.6 434.3,84.2 435.5,83.8 436.8,83.3 438.1,82.9 439.4,82.5 440.9,82.1 442.5,81.7 444.2,81.4 446.0,81.0 448.0,80.7 450.2,80.5 452.6,80.3 455.1,80.2 457.9,80.3 460.8,80.6 463.7,81.2 466.7,82.2 469.5,83.6 472.0,85.3 474.0,87.5 475.3,90.1 476.1,92.8 476.2,95.7 475.8,98.5" fill="#ff3b7c"/><polygon points="454.8,101.3 454.1,102.6 453.3,103.7 452.4,104.8 451.6,105.7 450.7,106.6 449.8,107.4 448.9,108.1 448.1,108.8 447.2,109.4 446.4,109.9 445.6,110.5 444.8,110.9 444.0,111.4 443.2,111.8 442.4,112.2 441.6,112.6 440.8,113.0 440.0,113.3 439.2,113.6 438.4,113.9 437.5,114.2 436.6,114.5 435.7,114.8 434.7,115.0 433.7,115.2 432.6,115.4 431.5,115.6 430.3,115.7 429.0,115.8 427.7,115.8 426.4,115.8 425.0,115.6 423.5,115.3 422.1,114.8 420.8,114.2 419.6,113.3 418.6,112.3 417.8,111.0 417.4,109.6 417.3,108.2 417.5,106.6 418.0,105.2 418.6,103.8 419.4,102.5 420.2,101.3 421.1,100.3 421.9,99.3 422.8,98.5 423.6,97.7 424.4,97.1 425.2,96.5 426.0,95.9 426.7,95.4 427.4,95.0 428.1,94.5 428.7,94.1 429.4,93.8 430.0,93.4 430.6,93.1 431.2,92.8 431.8,92.5 432.5,92.2 433.1,92.0 433.7,91.7 434.4,91.5 435.1,91.2 435.8,91.0 436.5,90.7 437.3,90.5 438.1,90.3 438.9,90.1 439.8,89.9 440.8,89.7 441.9,89.5 443.0,89.4 444.2,89.3 445.5,89.3 446.9,89.4 448.3,89.5 449.8,89.8 451.3,90.3 452.6,91.0 453.9,91.9 454.9,93.0 455.6,94.2 456.0,95.6 456.1,97.1 455.9,98.5 455.4,100.0" fill="#ff3c7d"/><circle cx="461.2" cy="156.7" r="140" fill="url(#spec)" clip-path="url(#sphclip)"/></g>
<polygon points="572.8,538.3 573.9,318.9 574.0,318.7 574.1,318.5 574.3,318.3 574.6,318.1 575.0,318.0 575.5,317.8 576.1,317.6 576.8,317.5 577.5,317.3 578.3,317.2 579.2,317.0 580.2,316.9 581.3,316.7 582.4,316.6 583.6,316.4 584.9,316.3 586.2,316.2 587.6,316.0 589.1,315.9 590.6,315.8 592.2,315.7 593.9,315.6 595.6,315.5 597.3,315.4 599.1,315.3 601.0,315.2 602.9,315.1 604.9,315.0 606.9,314.9 608.9,314.8 611.0,314.8 613.1,314.7 615.3,314.6 617.5,314.6 619.7,314.5 622.0,314.5 624.3,314.5 626.6,314.4 628.9,314.4 631.2,314.4 633.6,314.4 636.0,314.4 638.4,314.3 640.8,314.3 643.2,314.4 645.7,314.4 648.1,314.4 650.6,314.4 653.0,314.4 655.5,314.4 657.9,314.5 660.3,314.5 662.8,314.6 665.2,314.6 667.6,314.7 670.0,314.7 672.4,314.8 674.7,314.9 677.1,315.0 679.4,315.0 681.7,315.1 684.0,315.2 686.2,315.3 688.4,315.4 690.6,315.5 692.7,315.6 694.8,315.7 696.9,315.8 698.9,316.0 700.8,316.1 702.7,316.2 704.6,316.4 706.4,316.5 708.2,316.6 709.9,316.8 711.5,316.9 713.1,317.1 714.6,317.2 716.0,317.4 717.4,317.6 718.7,317.7 720.0,317.9 721.1,318.1 722.2,318.2 723.2,318.4 724.1,318.6 725.0,318.8 725.7,318.9 726.4,319.1 726.9,319.3 727.4,319.5 727.8,319.7 728.1,319.9 728.3,320.0 728.4,320.2 728.4,320.4 721.9,546.1 721.8,547.0 721.6,548.0 721.3,548.9 720.9,549.8 720.4,550.7 719.8,551.6 719.1,552.5 718.4,553.3 717.5,554.2 716.5,555.0 715.4,555.9 714.3,556.7 713.0,557.5 711.6,558.2 710.2,559.0 708.6,559.7 707.0,560.4 705.3,561.1 703.5,561.8 701.6,562.4 699.6,563.0 697.6,563.6 695.5,564.2 693.3,564.7 691.0,565.2 688.7,565.6 686.3,566.0 683.8,566.4 681.3,566.8 678.8,567.1 676.2,567.4 673.5,567.6 670.8,567.8 668.1,568.0 665.3,568.1 662.5,568.2 659.7,568.2 656.9,568.2 654.0,568.2 651.2,568.1 648.3,568.0 645.4,567.9 642.6,567.7 639.7,567.5 636.9,567.2 634.1,566.9 631.3,566.6 628.5,566.2 625.8,565.8 623.1,565.4 620.4,564.9 617.8,564.4 615.2,563.9 612.7,563.3 610.2,562.7 607.8,562.1 605.5,561.5 603.2,560.8 601.0,560.1 598.8,559.4 596.7,558.6 594.7,557.9 592.8,557.1 591.0,556.3 589.2,555.4 587.5,554.6 586.0,553.8 584.4,552.9 583.0,552.0 581.7,551.1 580.5,550.2 579.3,549.3 578.3,548.4 577.3,547.5 576.4,546.6 575.7,545.7 575.0,544.7 574.4,543.8 573.9,542.9 573.5,542.0 573.2,541.0 572.9,540.1 572.8,539.2" fill="url(#cylg)"/>
<polygon points="724.1,318.6 725.0,318.8 725.7,318.9 726.4,319.1 726.9,319.3 727.4,319.5 727.8,319.7 728.1,319.9 728.3,320.0 728.4,320.2 728.4,320.4 728.4,320.6 728.2,320.8 727.9,321.0 727.5,321.1 727.0,321.3 726.4,321.5 725.7,321.7 724.9,321.9 724.0,322.0 723.1,322.2 722.0,322.4 720.8,322.5 719.5,322.7 718.1,322.8 716.6,323.0 715.0,323.1 713.3,323.3 711.6,323.4 709.7,323.6 707.8,323.7 705.7,323.8 703.6,323.9 701.4,324.0 699.2,324.1 696.8,324.2 694.4,324.3 691.9,324.4 689.4,324.5 686.8,324.6 684.1,324.6 681.4,324.7 678.7,324.7 675.9,324.8 673.0,324.8 670.2,324.8 667.3,324.8 664.3,324.8 661.4,324.8 658.4,324.8 655.5,324.8 652.5,324.8 649.5,324.8 646.6,324.7 643.6,324.7 640.6,324.6 637.7,324.6 634.8,324.5 631.9,324.4 629.1,324.4 626.3,324.3 623.5,324.2 620.8,324.1 618.1,324.0 615.5,323.9 612.9,323.7 610.4,323.6 608.0,323.5 605.6,323.4 603.3,323.2 601.0,323.1 598.9,322.9 596.8,322.8 594.8,322.6 592.9,322.4 591.1,322.3 589.3,322.1 587.7,321.9 586.1,321.8 584.6,321.6 583.2,321.4 581.9,321.2 580.8,321.1 579.7,320.9 578.7,320.7 577.7,320.5 576.9,320.3 576.2,320.1 575.6,319.9 575.1,319.8 574.7,319.6 574.3,319.4 574.1,319.2 574.0,319.0 573.9,318.9 574.0,318.7 574.1,318.5 574.3,318.3 574.6,318.1 575.0,318.0 575.5,317.8 576.1,317.6 576.8,317.5 577.5,317.3 578.3,317.2 579.2,317.0 580.2,316.9 581.3,316.7 582.4,316.6 583.6,316.4 584.9,316.3 586.2,316.2 587.6,316.0 589.1,315.9 590.6,315.8 592.2,315.7 593.9,315.6 595.6,315.5 597.3,315.4 599.1,315.3 601.0,315.2 602.9,315.1 604.9,315.0 606.9,314.9 608.9,314.8 611.0,314.8 613.1,314.7 615.3,314.6 617.5,314.6 619.7,314.5 622.0,314.5 624.3,314.5 626.6,314.4 628.9,314.4 631.2,314.4 633.6,314.4 636.0,314.4 638.4,314.3 640.8,314.3 643.2,314.4 645.7,314.4 648.1,314.4 650.6,314.4 653.0,314.4 655.5,314.4 657.9,314.5 660.3,314.5 662.8,314.6 665.2,314.6 667.6,314.7 670.0,314.7 672.4,314.8 674.7,314.9 677.1,315.0 679.4,315.0 681.7,315.1 684.0,315.2 686.2,315.3 688.4,315.4 690.6,315.5 692.7,315.6 694.8,315.7 696.9,315.8 698.9,316.0 700.8,316.1 702.7,316.2 704.6,316.4 706.4,316.5 708.2,316.6 709.9,316.8 711.5,316.9 713.1,317.1 714.6,317.2 716.0,317.4 717.4,317.6 718.7,317.7 720.0,317.9 721.1,318.1 722.2,318.2 723.2,318.4" fill="#ffe069"/>
<g id="frontbox"><polygon points="460.3,432.2 601.5,418.4 599.8,560.5 462.7,585.6" fill="#50cce3" stroke="#50cce3" stroke-width="0.7" stroke-linejoin="round"/><polygon points="411.8,403.6 460.3,432.2 462.7,585.6 414.3,532.6" fill="#50cde4" stroke="#50cde4" stroke-width="0.7" stroke-linejoin="round"/><polygon points="411.8,403.6 543.6,394.8 601.5,418.4 460.3,432.2" fill="#56ddf6" stroke="#56ddf6" stroke-width="0.7" stroke-linejoin="round"/></g>
<polygon points="573.9,398 573.9,402.2 574.3,409 575.3,411.1 578,412.6 582.2,413.9 590.6,416.4 601.1,418.3 603,418.6 603,398" fill="url(#cylg)"/>
</g>
<g id="gizmo"><path d="M408.3 302.8L416.5 297.6M416.5 297.6L304.0 298.1M304.0 298.1L276.8 303.4M276.8 303.4L408.3 302.8M410.2 395.2L418.0 377.2M418.0 377.2L306.9 378.7M306.9 378.7L280.6 397.3M280.6 397.3L410.2 395.2M408.3 302.8L410.2 395.2M416.5 297.6L418.0 377.2M304.0 298.1L306.9 378.7M276.8 303.4L280.6 397.3" fill="none" stroke="#7cc4ee" stroke-width="0.9" stroke-opacity="0.85"/><line x1="352.8" y1="344.2" x2="416.8" y2="343.6" stroke="#ff3030" stroke-width="0.9" stroke-opacity="0.9"/><line x1="352.8" y1="344.2" x2="351.0" y2="281.0" stroke="#55f055" stroke-width="0.9" stroke-opacity="0.8"/><line x1="352.8" y1="344.2" x2="345.0" y2="349.5" stroke="#dddddd" stroke-width="1.5"/><polygon points="407.8,341.0 417.8,343.6 407.8,346.2" fill="#ff2222"/><polygon points="348.2,291.0 351.0,280.0 353.8,291.0" fill="#33ee33"/><circle cx="344.3" cy="349.7" r="3.1" fill="#1133ee"/><rect x="352.4" y="326.9" width="18.6" height="14.8" fill="#b5ef7a" fill-opacity="0.5"/></g>
</svg>
<svg width="0" height="0" style="position:absolute"><defs>
<symbol id="i-eye" viewBox="0 0 24 16"><path fill-rule="evenodd" d="M12 0.800C6.300 0.800 2 4.400 0.300 8c1.700 3.600 6 7.200 11.700 7.200S22 11.600 23.700 8C22 4.400 17.700 0.800 12 0.800zM12 2.600a5.400 5.400 0 1 1 0 10.800 5.400 5.400 0 0 1 0-10.800z"/><circle cx="12" cy="8" r="3.300"/><circle cx="10.300" cy="6.400" r="1.500" fill="#242424"/></symbol>
<symbol id="i-cube" viewBox="0 0 20 20"><path d="M10 0.300L0.800 4.200v11.400L10 19.700l9.200-4.100V4.200zM10 2.700l5.800 2.500L10 7.700 4.200 5.200zM11.200 9.800l5.800-2.600v7l-5.800 2.600z" fill-rule="evenodd"/></symbol>
<symbol id="i-chev" viewBox="0 0 12 8"><path d="M1.300 1.300L6 6l4.700-4.700" fill="none" stroke="currentColor" stroke-width="2" stroke-linecap="round" stroke-linejoin="round"/></symbol>
<symbol id="i-caret" viewBox="0 0 10 6"><path d="M0.500 0.500h9L5 5.800z"/></symbol>
<symbol id="i-trash" viewBox="0 0 14 16"><path d="M5 0.500h4l0.700 1.300H13.500v1.800H0.500V1.800H4.300zM1.500 4.600h11l-0.700 10c-0.100 0.800-0.600 1.200-1.300 1.200h-7c-0.700 0-1.200-0.400-1.300-1.200zM4.200 6.500v7h1.200v-7zm2.200 0v7h1.200v-7zm2.200 0v7h1.200v-7z" fill-rule="evenodd"/></symbol>
<symbol id="i-clone" viewBox="0 0 16 16"><path d="M2 0.500h9.500c0.800 0 1.500 0.700 1.500 1.500v1h-1.500V2H2v9.500h1V13H2c-0.800 0-1.500-0.700-1.500-1.500V2C0.500 1.200 1.200 0.500 2 0.500z"/><path d="M5.500 4h9c0.600 0 1 0.400 1 1v9.500c0 0.600-0.400 1-1 1h-9c-0.600 0-1-0.400-1-1V5c0-0.600 0.400-1 1-1zm0.500 1.500v8.500h8V5.500z" fill-rule="evenodd"/></symbol>
<symbol id="i-paste" viewBox="0 0 16 16"><path d="M1.500 1h3.200c0.300-0.600 0.900-1 1.800-1s1.500 0.400 1.800 1H11.500c0.600 0 1 0.400 1 1v2.500H7c-0.800 0-1.500 0.700-1.500 1.500v7.500H1.500c-0.600 0-1-0.400-1-1V2c0-0.600 0.400-1 1-1zM3 2v1.200h7V2z" fill-rule="evenodd"/><path d="M7.500 5.500H12v3.300h3.500V15c0 0.500-0.400 1-1 1h-7c-0.600 0-1-0.500-1-1V6.500c0-0.600 0.400-1 1-1zM13 5.600l2.400 2.300H13z"/></symbol>
<symbol id="i-gltf" viewBox="0 0 34 18"><path d="M14 0.500C6 0.500 0.500 4.300 0.500 9S6 17.500 14 17.500c4 0 7-0.900 9.500-2.400l-1-1.300C20.300 15 17.800 15.600 15 15.600 9.500 15.600 5.800 12.700 5.800 9S9.500 2.400 15 2.400c3.500 0 6.500 1 8.800 2.700l1.400-1C22.500 1.800 18.500 0.500 14 0.500z"/><path d="M15.500 4C11 4 8.200 6.200 8.200 9s2.800 5 7.300 5c2.200 0 4-0.500 5.300-1.400V8.200h-5.300v1.700h2.600v1.700c-0.700 0.300-1.600 0.500-2.600 0.500-2.600 0-4.300-1.300-4.300-3.100s1.700-3.100 4.300-3.100c1.500 0 2.700 0.400 3.700 1.100l1.300-1.400C19.300 4.500 17.600 4 15.500 4z"/><path d="M21.500 5h6.300v1.800h-2.100V13h-2.100V6.800h-2.100zM28.500 5h5v1.800h-3v1.500h2.600V10h-2.600v3h-2z"/></symbol>
<symbol id="i-save" viewBox="0 0 16 16"><path d="M1.500 0.500h10.300L15.500 4.200V14.500c0 0.600-0.400 1-1 1h-13c-0.600 0-1-0.400-1-1v-13c0-0.600 0.400-1 1-1zM2 2v12h1.500V9h9v5H14V4.800L11.200 2H11v4H3.500V2zM5 2v2.500h4.500V2zM7.300 2.400h1.500v1.700H7.300zM5 10.500V14h6v-3.500z" fill-rule="evenodd"/></symbol>
<symbol id="i-search" viewBox="0 0 16 16"><circle cx="6.500" cy="6.500" r="4.700" fill="none" stroke="currentColor" stroke-width="2.300"/><path d="M10.200 10.200L14.600 14.600" stroke="currentColor" stroke-width="2.600" stroke-linecap="round"/></symbol>
<symbol id="i-camera" viewBox="0 0 18 16"><path d="M6 1h6l1.200 2.200H16c0.900 0 1.500 0.600 1.500 1.500v9c0 0.900-0.600 1.500-1.500 1.500H2c-0.900 0-1.500-0.600-1.500-1.500v-9C0.500 3.800 1.100 3.200 2 3.200h2.800zM9 5.200a4 4 0 1 0 0 8 4 4 0 0 0 0-8zm0 1.700a2.300 2.300 0 1 1 0 4.600 2.300 2.300 0 0 1 0-4.600z" fill-rule="evenodd"/></symbol>
<symbol id="i-bulb" viewBox="0 0 12 18"><path d="M6 0.500C2.800 0.500 0.500 3 0.500 5.800c0 1.600 0.700 2.700 1.600 3.800 0.800 1 1.300 1.900 1.400 3.400h5c0.100-1.500 0.600-2.400 1.400-3.400 0.900-1.100 1.600-2.200 1.600-3.800C11.500 3 9.200 0.500 6 0.500zm0 1.600c2.200 0 3.900 1.700 3.900 3.700 0 1.100-0.500 1.900-1.300 2.900-0.700 0.800-1.200 1.700-1.500 2.800H4.900c-0.300-1.100-0.800-2-1.500-2.800-0.800-1-1.300-1.800-1.300-2.900 0-2 1.700-3.700 3.900-3.700zM3.500 14h5v1.500h-5zM4.200 16.300h3.600L7 17.500H5z" fill-rule="evenodd"/><path d="M6 3C4.500 3 3.300 4.200 3.300 5.600h1C4.300 4.700 5 4 6 4z"/></symbol>
</defs></svg>

<div id="left">
<div id="topstrip"></div>
<div id="back">Back to Scene</div>
<!-- toolbar -->
<svg class="abs" style="left:5.8px;top:33.3px" width="11.4" height="11.4" viewBox="0 0 12 12"><path d="M4.500 0.300h3v4.200h4.200v3H7.500v4.200h-3V7.500H0.300v-3h4.200z" fill="#dcdcdc"/></svg>
<svg class="abs" style="left:24.800px;top:33.300px" width="11.400" height="12" viewBox="0 0 12 12"><path d="M0.300 0.200L11.800 6 0.300 11.800z" fill="#cfcfcf"/></svg>
<svg class="abs ic" style="left:43.800px;top:34.200px;fill:#dadada" width="17" height="9.300"><use href="#i-gltf"/></svg>
<svg class="abs" style="left:69.700px;top:33px;fill:#cfcfcf" width="12.200" height="12.200"><use href="#i-save"/></svg>
<div id="search">Search...</div>
<svg class="abs" style="left:167.800px;top:57.200px;color:#cfcfcf" width="14" height="14"><use href="#i-search"/></svg>
<div class="row" style="top:81.20px"><svg style="left:0.2px;top:6.3px;fill:#bdbdbd" width="11.4" height="7.6"><use href="#i-eye"/></svg><svg style="left:13.6px;top:8.3px;fill:#e6e6e6" width="7" height="4.2"><use href="#i-caret"/></svg><span class="t" style="left:23.8px">&lt;a-scene&gt;</span></div>
<div class="row" style="top:99.95px"><svg style="left:0.2px;top:6.3px;fill:#bdbdbd" width="11.4" height="7.6"><use href="#i-eye"/></svg><span class="t">&lt;a-box <svg style="position:static;display:inline-block;vertical-align:-1.9px;margin:0 1.3px 0 1.2px;fill:#c8c8c8" width="11.0" height="11.0"><use href="#i-cube"/></svg>&gt;</span></div>
<div class="row sel" style="top:118.70px"><svg style="left:0.2px;top:6.3px;fill:#e8e8e8" width="11.4" height="7.6"><use href="#i-eye"/></svg><span class="t">&lt;a-box <svg style="position:static;display:inline-block;vertical-align:-1.9px;margin:0 1.3px 0 1.2px;fill:#fff" width="11.0" height="11.0"><use href="#i-cube"/></svg>&gt;</span><svg style="left:160.6px;top:5.7px;fill:#d6e2ea" width="9.6" height="9.6"><use href="#i-clone"/></svg><svg style="left:176.3px;top:5.7px;fill:#d6e2ea" width="7.6" height="9.2"><use href="#i-trash"/></svg></div>
<div class="row" style="top:137.45px"><svg style="left:0.2px;top:6.3px;fill:#bdbdbd" width="11.4" height="7.6"><use href="#i-eye"/></svg><span class="t">&lt;a-sphere <svg style="position:static;display:inline-block;vertical-align:-1.9px;margin:0 1.3px 0 1.2px;fill:#c8c8c8" width="11.0" height="11.0"><use href="#i-cube"/></svg>&gt;</span></div>
<div class="row" style="top:156.20px"><svg style="left:0.2px;top:6.3px;fill:#bdbdbd" width="11.4" height="7.6"><use href="#i-eye"/></svg><span class="t">&lt;a-cylinder <svg style="position:static;display:inline-block;vertical-align:-1.9px;margin:0 1.3px 0 1.2px;fill:#c8c8c8" width="11.0" height="11.0"><use href="#i-cube"/></svg>&gt;</span></div>
<div class="row" style="top:174.95px"><svg style="left:0.2px;top:6.3px;fill:#bdbdbd" width="11.4" height="7.6"><use href="#i-eye"/></svg><span class="t">&lt;a-plane <svg style="position:static;display:inline-block;vertical-align:-1.9px;margin:0 1.3px 0 1.2px;fill:#c8c8c8" width="11.0" height="11.0"><use href="#i-cube"/></svg>&gt;</span></div>
<div class="row" style="top:193.70px"><svg style="left:0.2px;top:6.3px;fill:#bdbdbd" width="11.4" height="7.6"><use href="#i-eye"/></svg><span class="t">&lt;a-entity <svg style="position:static;display:inline-block;vertical-align:-1.9px;margin:0 1.3px 0 1.2px;fill:#c8c8c8" width="11.4" height="10.0"><use href="#i-camera"/></svg>&gt;</span></div>
<div class="row" style="top:212.45px"><svg style="left:0.2px;top:6.3px;fill:#bdbdbd" width="11.4" height="7.6"><use href="#i-eye"/></svg><span class="t">&lt;a-entity <svg style="position:static;display:inline-block;vertical-align:-1.9px;margin:0 1.3px 0 1.2px;fill:#c8c8c8" width="6.6" height="10.0"><use href="#i-bulb"/></svg>&gt;</span></div>
<div class="row" style="top:231.20px"><svg style="left:0.2px;top:6.3px;fill:#bdbdbd" width="11.4" height="7.6"><use href="#i-eye"/></svg><span class="t">&lt;a-entity <svg style="position:static;display:inline-block;vertical-align:-1.9px;margin:0 1.3px 0 1.2px;fill:#c8c8c8" width="6.6" height="10.0"><use href="#i-bulb"/></svg>&gt;</span></div>
</div>

<div id="bar">
<span class="abs" style="left:13.400px;top:0;line-height:26.400px;white-space:nowrap;font-size:10.83px;letter-spacing:0.31px">Perspective</span>
<svg class="abs" style="left:82px;top:9.600px;color:#e4e4e4" width="10" height="6.700"><use href="#i-chev"/></svg>
<div class="abs" style="left:453.300px;top:0;width:25px;height:26.400px;background:#1faaf2"></div>
<svg class="abs" style="left:459.500px;top:5.900px" width="13" height="13" viewBox="0 0 16 16" fill="#fff"><path d="M3 3L13 13M13 3L3 13" stroke="#fff" stroke-width="2.700" fill="none"/><path d="M0.400 0.400h6.200L0.400 6.600zM15.600 0.400v6.200L9.400 0.400zM0.400 15.600v-6.200L6.600 15.600zM15.600 15.600h-6.200L15.600 9.400z"/></svg>
<svg class="abs" style="left:489.600px;top:5.800px" width="13.200" height="13.200" viewBox="0 0 16 16"><path d="M12.300 5.400A5.300 5.300 0 1 0 13.200 10.300" fill="none" stroke="#d0d0d0" stroke-width="2.700"/><path d="M15.400 0.800v6.600H8.800z" fill="#d0d0d0"/></svg>
<svg class="abs" style="left:520.200px;top:5.700px" width="13.200" height="13.200" viewBox="0 0 16 16" fill="#d0d0d0"><path d="M4 12L12 4" stroke="#d0d0d0" stroke-width="2.500" fill="none"/><path d="M9 0.700h6.300v6.300zM7 15.300H0.700V9z"/></svg>
<div class="abs" style="left:553.400px;top:6.100px;width:15px;height:15px;background:#fff;border-radius:2px"></div>
<span class="abs" style="left:573.200px;top:0;line-height:26.800px;color:#c4c4c4;font-size:10.83px;letter-spacing:0.4px">local</span>
</div>

<div id="right">
<div id="rhead"></div>
<span class="abs" style="left:12.3px;top:0;line-height:26px;color:#fff;-webkit-text-stroke:0.25px #fff;font-size:12.5px;letter-spacing:0.25px;white-space:nowrap">&lt;a-box<svg style="display:inline-block;vertical-align:-1.8px;fill:#d8d8d8;margin:0 1.2px 0 3.4px" width="12" height="12"><use href="#i-cube"/></svg>&gt;</span>
<svg class="abs" style="left:232.6px;top:7px;fill:#dadada" width="17" height="8.8"><use href="#i-gltf"/></svg>
<svg class="abs" style="left:258.6px;top:3.8px;fill:#cfcfcf" width="13.6" height="13.2"><use href="#i-paste"/></svg>
<span class="lab" style="top:41.6px">ID</span>
<div class="inp" style="left:120.600px;top:36.800px;width:140px;height:21.700px"></div>
<span class="lab" style="top:70.6px">class</span>
<span class="lab b" style="top:99.6px">position</span>
<span class="num" style="left:125.6px;top:99.5px">-1.500</span>
<span class="num" style="left:168.1px;top:99.5px">0.958</span>
<span class="num" style="left:210.6px;top:99.5px">-7.035</span>
<span class="lab b" style="top:128.6px">rotation</span>
<span class="num" style="left:125.6px;top:128.5px">0.000</span>
<span class="num" style="left:168.1px;top:128.5px;width:32.6px;overflow:hidden">30.000</span>
<span class="num" style="left:210.6px;top:128.5px">0.000</span>
<span class="lab" style="top:157.6px">scale</span>
<span class="num" style="left:125.6px;top:157.5px">1.000</span>
<span class="num" style="left:168.1px;top:157.5px">1.000</span>
<span class="num" style="left:210.6px;top:157.5px">1.000</span>
<span class="lab" style="top:186.6px">visible</span>
<div class="cb on" style="left:121.2px;top:184.8px"><svg width="14.8" height="14.8" viewBox="0 0 16 16" style="display:block"><path d="M3.500 8.500l3 3L12.700 4.500" fill="none" stroke="#fff" stroke-width="2.600" stroke-linecap="round" stroke-linejoin="round"/></svg></div>
<span class="lab" style="top:215.6px">mixins</span>
<div class="inp" style="left:121.5px;top:210.2px;width:134.2px;height:21.7px"></div>
<span class="abs" style="left:128.4px;top:210.2px;line-height:22.3px;color:#e0e0e0;-webkit-text-stroke:0.2px;font-size:10.830px;letter-spacing:0.30px;white-space:nowrap">Add mixin...</span>
<svg class="abs" style="left:236.4px;top:217.9px;color:#f0f0f0" width="10.400" height="6.800"><use href="#i-chev"/></svg>
<div class="abs" style="left:0;top:239.300px;width:100%;height:93px;background:#1f1f1f"></div>
<span class="abs" style="left:0;width:100%;text-align:center;top:262.400px;line-height:15px;color:#cdcdcd;font-size:12.300px;letter-spacing:0.120px;padding-left:5.4px">COMPONENTS</span>
<div class="inp" style="left:55.3px;top:285.9px;width:170.0px;height:28.0px"></div>
<span class="abs" style="left:63.5px;top:285.9px;line-height:28.6px;color:#e0e0e0;-webkit-text-stroke:0.2px;font-size:10.830px;letter-spacing:0.30px;white-space:nowrap">Add component...</span>
<svg class="abs" style="left:205.1px;top:296.8px;color:#f0f0f0" width="10.400" height="6.800"><use href="#i-chev"/></svg>
<div class="chead" style="top:332.200px"><svg class="abs" style="left:10px;top:12px;fill:#d0d0d0" width="9" height="5.600"><use href="#i-caret"/></svg><span class="ti">GEOMETRY</span><svg class="abs" style="left:239.200px;top:7.700px;fill:#cfcfcf" width="14" height="13.200"><use href="#i-paste"/></svg><svg class="abs" style="left:262.100px;top:9.200px;fill:#bdbdbd" width="9.600" height="11.200"><use href="#i-trash"/></svg></div>
<span class="lab" style="top:376.5px">buffer</span>
<div class="cb on" style="left:121.2px;top:375.9px"><svg width="14.8" height="14.8" viewBox="0 0 16 16" style="display:block"><path d="M3.500 8.500l3 3L12.700 4.500" fill="none" stroke="#fff" stroke-width="2.600" stroke-linecap="round" stroke-linejoin="round"/></svg></div>
<span class="lab" style="top:405.5px">depth</span>
<span class="num" style="left:125.6px;top:405.8px">1.000</span>
<span class="lab" style="top:434.5px">height</span>
<span class="num" style="left:125.6px;top:434.8px">1.000</span>
<span class="lab b" style="top:463.5px">primitive</span>
<div class="inp" style="left:121.5px;top:459.4px;width:134.2px;height:21.7px"></div>
<span class="abs" style="left:129.4px;top:459.4px;line-height:22.3px;color:#3794d2;-webkit-text-stroke:0.2px;font-size:10.830px;letter-spacing:0.30px;white-space:nowrap">box</span>
<svg class="abs" style="left:233.6px;top:467.1px;color:#f0f0f0" width="10.400" height="6.800"><use href="#i-chev"/></svg>
<span class="lab" style="top:492.5px">segmentsDepth</span>
<span class="num" style="left:125.6px;top:492.8px">1</span>
<span class="lab" style="top:521.5px">segmentsHeight</span>
<span class="num" style="left:125.6px;top:521.8px">1</span>
<span class="lab" style="top:550.5px">segmentsWidth</span>
<span class="num" style="left:125.6px;top:550.8px">1</span>
<span class="lab" style="top:579.5px">skipCache</span>
<div class="cb off" style="left:121.200px;top:579.1px"></div>
<span class="lab" style="top:608.5px">width</span>
<span class="num" style="left:125.6px;top:608.8px">1.000</span>
<div class="chead" style="top:633.200px"><svg class="abs" style="left:10px;top:12px;fill:#d0d0d0" width="9" height="5.600"><use href="#i-caret"/></svg><span class="ti">MATERIAL</span><svg class="abs" style="left:239.200px;top:7.700px;fill:#cfcfcf" width="14" height="13.200"><use href="#i-paste"/></svg><svg class="abs" style="left:262.100px;top:9.200px;fill:#bdbdbd" width="9.600" height="11.200"><use href="#i-trash"/></svg></div>
<span class="lab" style="top:678.5px">alphaTest</span>
<span class="num" style="left:125.6px;top:677.9px">0.000</span>
<span class="lab" style="top:707.0px">ambientOcclusio</span>
<div class="inp" style="left:121.400px;top:702.800px;width:99.800px;height:21.700px"></div>
<div class="abs" style="left:223.800px;top:702.300px;width:28.200px;height:22px;border:1px solid #3c3c3c;border-radius:3px;background:#232323"></div>
</div>
<div class="abs" style="left:850.500px;top:-6px;width:240px;height:7.500px;background:#fff;border-radius:5px"></div>
</div></body></html>
